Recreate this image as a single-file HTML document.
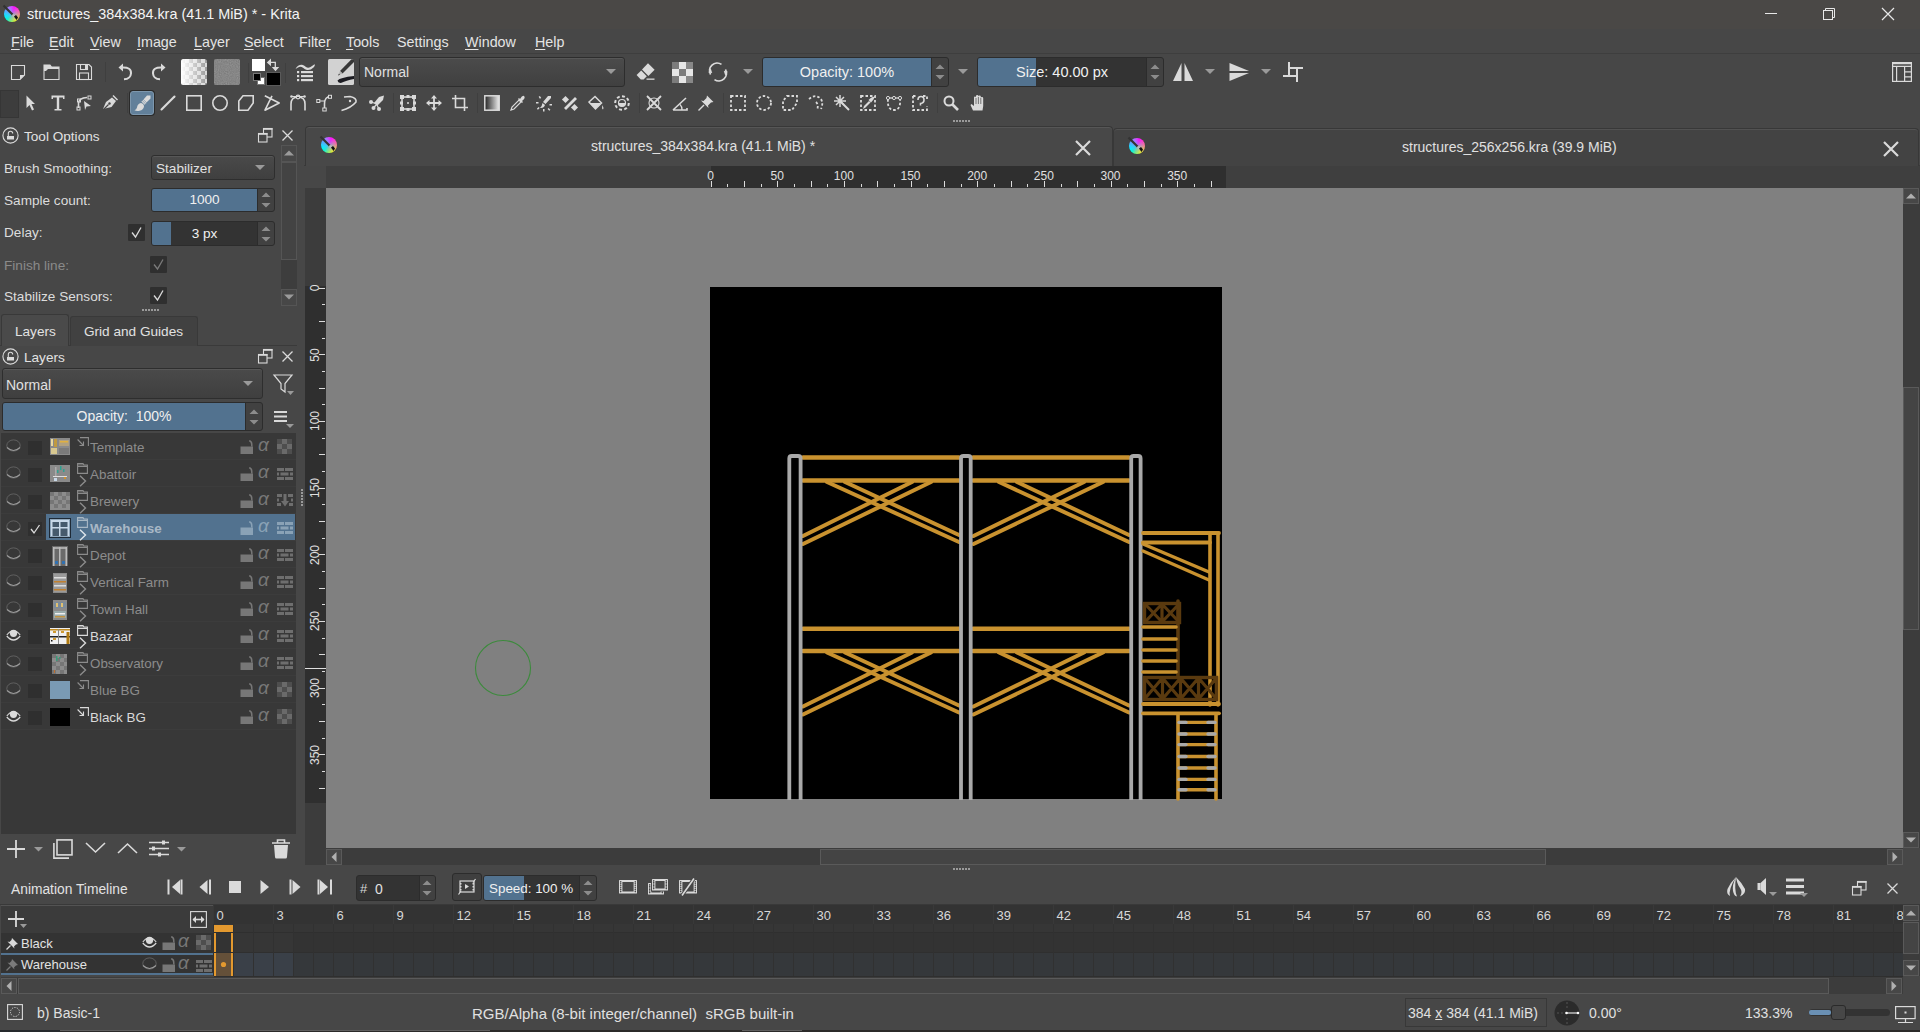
<!DOCTYPE html><html><head><meta charset="utf-8"><style>
*{margin:0;padding:0;box-sizing:border-box}
html,body{width:1920px;height:1032px;overflow:hidden;background:#474747;font-family:"Liberation Sans",sans-serif;color:#dcdcdc}
.a{position:absolute}
.t{position:absolute;white-space:nowrap;line-height:1}
svg{position:absolute;overflow:visible}
</style></head><body><div class="a" style="left:0px;top:0px;width:1920px;height:29px;background:#4a4846;"></div>
<div class="a" style="left:3.8499999999999996px;top:6.049999999999999px;width:16.3px;height:16.3px;border-radius:50%;background:conic-gradient(from 20deg,#ff10ff,#ff6a9a 60deg,#ffc040 100deg,#ffff00 135deg,#80ff60 170deg,#00ffd0 200deg,#00f0ff 230deg,#60a0ff 280deg,#b070ff 320deg,#ff10ff 360deg)"></div>
<div class="a" style="left:3.8499999999999996px;top:6.049999999999999px;width:16.3px;height:16.3px;border-radius:50%;background:radial-gradient(circle at 55% 60%,rgba(120,170,230,0.85) 0,rgba(120,170,230,0.4) 30%,rgba(255,255,255,0) 62%)"></div>
<svg style="left:3px;top:5.199999999999999px;" width="18" height="18" viewBox="0 0 18 18"><line x1="0.5" y1="0.5" x2="10" y2="10" stroke="#333" stroke-width="2.2"/><line x1="9.5" y1="9.5" x2="11.5" y2="11.5" stroke="#bbb" stroke-width="2.2"/><path d="M11 11.5 L13 10 L15 12.5 L13.5 15 Z" fill="#111"/></svg>
<div class="t" style="left:27px;top:7px;font-size:14.4px;color:#f4f4f4;">structures_384x384.kra (41.1 MiB) * - Krita</div>
<svg style="left:1750px;top:0px;" width="170" height="29" viewBox="0 0 170 29"><g stroke="#e8e8e8" stroke-width="1" fill="none"><line x1="15" y1="13.5" x2="27" y2="13.5"/><rect x="73.5" y="10.5" width="9" height="9"/><path d="M75.5 10.5 V8.5 H84.5 V17.5 H82.5"/><path d="M132 8 L144 20 M144 8 L132 20" stroke-width="1.2"/></g></svg>
<div class="a" style="left:0px;top:29px;width:1920px;height:24px;background:#474747;"></div>
<div class="t" style="left:11px;top:35px;font-size:14.3px;color:#e4e4e4;"><u style="text-decoration-thickness:1px;text-underline-offset:2px">F</u>ile</div>
<div class="t" style="left:49px;top:35px;font-size:14.3px;color:#e4e4e4;"><u style="text-decoration-thickness:1px;text-underline-offset:2px">E</u>dit</div>
<div class="t" style="left:90px;top:35px;font-size:14.3px;color:#e4e4e4;"><u style="text-decoration-thickness:1px;text-underline-offset:2px">V</u>iew</div>
<div class="t" style="left:137px;top:35px;font-size:14.3px;color:#e4e4e4;"><u style="text-decoration-thickness:1px;text-underline-offset:2px">I</u>mage</div>
<div class="t" style="left:194px;top:35px;font-size:14.3px;color:#e4e4e4;"><u style="text-decoration-thickness:1px;text-underline-offset:2px">L</u>ayer</div>
<div class="t" style="left:244px;top:35px;font-size:14.3px;color:#e4e4e4;"><u style="text-decoration-thickness:1px;text-underline-offset:2px">S</u>elect</div>
<div class="t" style="left:299px;top:35px;font-size:14.3px;color:#e4e4e4;">Filte<u style="text-decoration-thickness:1px;text-underline-offset:2px">r</u></div>
<div class="t" style="left:346px;top:35px;font-size:14.3px;color:#e4e4e4;"><u style="text-decoration-thickness:1px;text-underline-offset:2px">T</u>ools</div>
<div class="t" style="left:397px;top:35px;font-size:14.3px;color:#e4e4e4;">Settin<u style="text-decoration-thickness:1px;text-underline-offset:2px">g</u>s</div>
<div class="t" style="left:465px;top:35px;font-size:14.3px;color:#e4e4e4;"><u style="text-decoration-thickness:1px;text-underline-offset:2px">W</u>indow</div>
<div class="t" style="left:535px;top:35px;font-size:14.3px;color:#e4e4e4;"><u style="text-decoration-thickness:1px;text-underline-offset:2px">H</u>elp</div>
<div class="a" style="left:0px;top:53px;width:1920px;height:1px;background:#3e3e3e;"></div>
<svg style="left:10px;top:64px;" width="16" height="16" viewBox="0 0 16 16"><path d="M1.5 1.5 H14.5 V11 L10 15.5 H1.5 Z" fill="none" stroke="#dadada" stroke-width="1.1"/><path d="M14.5 11 H10 V15.5 Z" fill="#dadada"/></svg>
<svg style="left:43px;top:64px;" width="17" height="16" viewBox="0 0 17 16"><path d="M1 15.5 V1 H7 L8.5 3 H16 V15.5 Z" fill="none" stroke="#dadada" stroke-width="1.1"/><path d="M1 1 H7 L8.5 3 H16 V5 H5 L3 7 H1 Z" fill="#dadada"/></svg>
<svg style="left:76px;top:64px;" width="16" height="16" viewBox="0 0 16 16"><path d="M0.5 0.5 H13 L15.5 3 V15.5 H0.5 Z" fill="none" stroke="#dadada" stroke-width="1.1"/><rect x="4.5" y="0.5" width="7" height="5" fill="none" stroke="#dadada" stroke-width="1.1"/><rect x="3.5" y="9" width="9" height="6.5" fill="none" stroke="#dadada" stroke-width="1.1"/><rect x="9" y="1" width="2" height="4" fill="#dadada"/></svg>
<div class="a" style="left:105px;top:62px;width:1px;height:20px;background:#3f3f3f;"></div>
<svg style="left:117px;top:62px;" width="18" height="19" viewBox="0 0 18 19"><path d="M5 5.5 Q14.5 5 14 11.5 Q13.5 17 7 17.3" fill="none" stroke="#dadada" stroke-width="2"/><path d="M1.5 5.5 L6 1.5 V9.5 Z" fill="#dadada"/></svg>
<svg style="left:149px;top:62px;" width="18" height="19" viewBox="0 0 18 19"><path d="M13 5.5 Q3.5 5 4 11.5 Q4.5 17 11 17.3" fill="none" stroke="#dadada" stroke-width="2"/><path d="M16.5 5.5 L12 1.5 V9.5 Z" fill="#dadada"/></svg>
<svg style="left:181px;top:59px;" width="26" height="26" viewBox="0 0 26 26"><defs><pattern id="ck1" width="8" height="8" patternUnits="userSpaceOnUse"><rect width="8" height="8" fill="#d8d8d8"/><rect width="4" height="4" fill="#9a9a9a"/><rect x="4" y="4" width="4" height="4" fill="#9a9a9a"/></pattern><linearGradient id="gw" x1="0" x2="1"><stop offset="0" stop-color="#fff" stop-opacity="1"/><stop offset="1" stop-color="#fff" stop-opacity="0"/></linearGradient></defs><rect width="26" height="26" rx="2.5" fill="url(#ck1)"/><rect width="26" height="26" rx="2.5" fill="url(#gw)"/></svg>
<svg style="left:214px;top:59px;" width="26" height="26" viewBox="0 0 26 26"><defs><filter id="nz" x="0" y="0" width="1" height="1"><feTurbulence type="fractalNoise" baseFrequency="0.9" numOctaves="2" seed="3"/><feColorMatrix type="matrix" values="0 0 0 0 0.47  0 0 0 0 0.47  0 0 0 0 0.47  0.3 0.3 0.3 0 -0.25"/></filter></defs><rect width="26" height="26" rx="2.5" fill="#7a7a7a"/><rect width="26" height="26" rx="2.5" fill="#7a7a7a" filter="url(#nz)"/></svg>
<div class="a" style="left:248px;top:63px;width:1px;height:20px;background:#3f3f3f;"></div>
<div class="a" style="left:252px;top:59px;width:13px;height:12px;background:#ffffff;"></div>
<div class="a" style="left:267px;top:73px;width:13px;height:12px;background:#000000;outline:1px solid #5a5a5a"></div>
<svg style="left:253px;top:73px;" width="12" height="12" viewBox="0 0 12 12"><rect x="0.5" y="0.5" width="7" height="7" fill="#000" stroke="#777"/><rect x="4.5" y="4.5" width="7" height="7" fill="#fff" stroke="#777"/><rect x="0.5" y="0.5" width="7" height="7" fill="#000" stroke="#777"/></svg>
<svg style="left:266px;top:58px;" width="15" height="15" viewBox="0 0 15 15"><path d="M4.5 4.4 H9.3 V9.5" fill="none" stroke="#dadada" stroke-width="1.3"/><path d="M0.8 4.4 L5 0.6 V8.2 Z M5.8 9 H13.2 L9.5 13.2 Z" fill="#dadada"/></svg>
<div class="a" style="left:285px;top:63px;width:1px;height:20px;background:#3f3f3f;"></div>
<svg style="left:295px;top:62px;" width="21" height="20" viewBox="0 0 21 20"><path d="M0.5 7 Q3 2.5 7 2.8 Q9 3 11 5 Q13 6.5 15.5 5 Q18 3.2 19.5 2.2 Q20.5 3 18.5 5.5 Q15.5 8.5 12 8 Q10 7.5 8 5.8 Q5.5 4 3 5.5 Z" fill="#dadada"/><rect x="2" y="9" width="2.2" height="2.2" fill="#dadada"/><rect x="2" y="13" width="2.2" height="2.2" fill="#dadada"/><rect x="2" y="17" width="2.2" height="2.2" fill="#dadada"/><rect x="6" y="9" width="12" height="2.2" fill="#dadada"/><rect x="6" y="13" width="12" height="2.2" fill="#dadada"/><rect x="6" y="17" width="12" height="2.2" fill="#dadada"/></svg>
<svg style="left:328px;top:59px;" width="26" height="26" viewBox="0 0 26 26"><rect width="26" height="26" rx="1.5" fill="#d2d2d2"/><path d="M12 12 L23.5 0.3 L26 0.3 L26 3 L14.5 14.5 Z" fill="#383838"/><path d="M12 12 L14.5 14.5 L10.2 16.4 Z" fill="#b0b0b0"/><path d="M10.2 16.4 L10.9 14.7 L11.9 15.7 Z" fill="#222"/><path d="M9.5 21.5 Q12 18.5 26 17 V20 Q18 21.5 13.5 23.8 Q10 24.5 9.5 21.5 Z" fill="#1c1c22"/></svg>
<div class="a" style="left:359px;top:57px;width:266px;height:30px;border:1px solid #2d2d2d;border-radius:3px;background:linear-gradient(#4b4b4b,#404040);box-shadow:inset 0 1px 0 #575757"></div>
<div class="t" style="left:364px;top:65px;font-size:14px;color:#e0e0e0;">Normal</div>
<svg style="left:606px;top:69px;" width="11" height="6" viewBox="0 0 11 6"><path d="M0 0 H10 L5 5 Z" fill="#9a9a9a"/></svg>
<svg style="left:636px;top:62px;" width="20" height="19" viewBox="0 0 20 19"><path d="M6 7.5 L12 1.2 L18.6 7.8 L12.4 14 Z" fill="#dadada"/><path d="M0.6 13 L5.2 8.6 L10.8 14.3 L7.6 17.6 H4.8 Z" fill="#dadada"/><rect x="10.5" y="16.5" width="8" height="1.3" fill="#dadada"/></svg>
<svg style="left:672px;top:62px;" width="21" height="21" viewBox="0 0 21 21"><rect width="21" height="21" fill="#e6e6e6"/><g fill="#7c7c7c"><rect x="0" y="0" width="7" height="7"/><rect x="14" y="0" width="7" height="7" fill="#888"/><rect x="7" y="7" width="7" height="7"/><rect x="0" y="14" width="7" height="7"/><rect x="14" y="14" width="7" height="7" fill="#888"/></g></svg>
<svg style="left:708px;top:62px;" width="20" height="20" viewBox="0 0 20 20"><path d="M2.6 12.5 A7.6 7.6 0 0 1 13.5 2.4" fill="none" stroke="#dadada" stroke-width="1.7"/><path d="M17.4 7.5 A7.6 7.6 0 0 1 6.5 17.6" fill="none" stroke="#dadada" stroke-width="1.7"/><path d="M15.8 9 L17.3 13.8 L19.6 9.6 Z M4.2 11 L2.7 6.2 L0.4 10.4 Z" fill="#dadada"/></svg>
<svg style="left:743px;top:69px;" width="11" height="6" viewBox="0 0 11 6"><path d="M0 0 H10 L5 5 Z" fill="#9a9a9a"/></svg>
<div class="a" style="left:762px;top:57px;width:187px;height:30px;border:1px solid #2c2c2c;border-radius:3px;background:#414141;overflow:hidden"><div class="a" style="left:0;top:0;width:168px;height:28px;background:#333333"></div><div class="a" style="left:0;top:0;width:169px;height:28px;background:#52728f"></div><div class="a" style="left:168px;top:0;width:1px;height:28px;background:#2c2c2c"></div></div>
<svg style="left:934.5px;top:62.0px;" width="10" height="20" viewBox="0 0 10 20"><path d="M0.5 7 L5 2.5 L9.5 7 Z M0.5 13 L5 17.5 L9.5 13 Z" fill="#8c8c8c"/></svg>
<div class="t" style="left:762px;top:57px;width:170px;height:30px;line-height:30px;text-align:center;font-size:14.5px;color:#f0f0f0">Opacity: 100%</div>
<svg style="left:958px;top:69px;" width="11" height="6" viewBox="0 0 11 6"><path d="M0 0 H10 L5 5 Z" fill="#9a9a9a"/></svg>
<div class="a" style="left:977px;top:57px;width:187px;height:30px;border:1px solid #2c2c2c;border-radius:3px;background:#414141;overflow:hidden"><div class="a" style="left:0;top:0;width:168px;height:28px;background:#333333"></div><div class="a" style="left:0;top:0;width:58px;height:28px;background:#52728f"></div><div class="a" style="left:168px;top:0;width:1px;height:28px;background:#2c2c2c"></div></div>
<svg style="left:1149.5px;top:62.0px;" width="10" height="20" viewBox="0 0 10 20"><path d="M0.5 7 L5 2.5 L9.5 7 Z M0.5 13 L5 17.5 L9.5 13 Z" fill="#8c8c8c"/></svg>
<div class="t" style="left:977px;top:57px;width:170px;height:30px;line-height:30px;text-align:center;font-size:14.5px;color:#f0f0f0">Size: 40.00 px</div>
<svg style="left:1172px;top:62px;" width="22" height="20" viewBox="0 0 22 20"><path d="M1 19 L9.5 1 V19 Z M21 19 L12.5 1 V19 Z" fill="#dadada"/></svg>
<svg style="left:1205px;top:69px;" width="11" height="6" viewBox="0 0 11 6"><path d="M0 0 H10 L5 5 Z" fill="#9a9a9a"/></svg>
<svg style="left:1228px;top:62px;" width="22" height="20" viewBox="0 0 22 20"><path d="M1.5 1 L21 9 H1.5 Z M1.5 19 L21 11 H1.5 Z" fill="#dadada"/></svg>
<svg style="left:1261px;top:69px;" width="11" height="6" viewBox="0 0 11 6"><path d="M0 0 H10 L5 5 Z" fill="#9a9a9a"/></svg>
<svg style="left:1282px;top:60px;" width="24" height="24" viewBox="0 0 24 24"><path d="M7 2 V17 M6 8 H21 M1 16 H16 M15 8 V22" fill="none" stroke="#dadada" stroke-width="2"/></svg>
<svg style="left:1892px;top:62px;" width="20" height="20" viewBox="0 0 20 20"><rect x="0.6" y="0.6" width="18.8" height="18.8" fill="none" stroke="#dadada" stroke-width="1.2"/><path d="M0.6 1.6 H19.4 M0.6 4.3 H19.4 M4.6 4.3 V19.4 M12.6 4.3 V19.4 M12.6 9.8 H19.4 M12.6 14.8 H19.4" fill="none" stroke="#dadada" stroke-width="1.2"/></svg>
<div class="a" style="left:0px;top:90px;width:19px;height:28px;background:#3d3d3d;border:1px solid #363636"></div>
<svg style="left:25.0px;top:95px;" width="12" height="16" viewBox="0 0 12 16"><path d="M1.5 0.5 L10 9 H6.5 L9 14.5 L7 15.5 L4.5 10 L1.5 13 Z" fill="#dadada"/></svg>
<svg style="left:51.0px;top:95px;" width="14" height="16" viewBox="0 0 14 16"><path d="M0.5 0.5 H13.5 V4 H12 V2.5 H8.2 V14 H10.5 V15.5 H3.5 V14 H5.8 V2.5 H2 V4 H0.5 Z" fill="#dadada"/></svg>
<svg style="left:76.0px;top:95px;" width="16" height="16" viewBox="0 0 16 16"><path d="M2.5 13 V8 Q3 3 11 2.5" fill="none" stroke="#dadada" stroke-width="1.6" stroke-width="1.2"/><rect x="1" y="12" width="3" height="3" fill="none" stroke="#dadada"/><rect x="1.5" y="4" width="3" height="3" fill="none" stroke="#dadada"/><rect x="12" y="1" width="3" height="3" fill="none" stroke="#dadada"/><path d="M8 6 L15 11 L10.5 11.5 L9 15 Z" fill="#dadada"/></svg>
<svg style="left:102.0px;top:95px;" width="16" height="16" viewBox="0 0 16 16"><path d="M1 14 L4 7 L10 2.5 L14 6 L9.5 12 Z" fill="#dadada"/><path d="M1.5 14.5 L6.5 9.5" stroke="#474747" stroke-width="1.3"/><circle cx="7.5" cy="8.5" r="1.2" fill="#474747"/><path d="M11 0.5 L15.5 5" stroke="#dadada" stroke-width="1.4"/></svg>
<div class="a" style="left:127px;top:93px;width:1px;height:20px;background:#3f3f3f;"></div>
<div class="a" style="left:129px;top:90px;width:26px;height:26px;background:#2a2a2a;border-radius:4px"></div>
<div class="a" style="left:130px;top:91px;width:24px;height:24px;background:#62809a;border:1px solid #7d97ad;border-radius:3px"></div>
<svg style="left:134px;top:95px;" width="17" height="17" viewBox="0 0 17 17"><path d="M9.5 4.5 L13 0.5 H16.5 V3.5 L12.5 7.5 Z" fill="#dadada"/><path d="M7.8 6.2 L11 9.4 M8.9 5.1 L12.1 8.3" stroke="#dadada" stroke-width="1.1"/><path d="M7 8 Q10 8.5 10 11.5 Q9.5 15 5.5 15.8 Q2.5 16.3 0.5 15.3 Q2.5 14.5 3 12.5 Q3.5 8.5 7 8 Z" fill="#dadada"/></svg>
<svg style="left:160.0px;top:95px;" width="16" height="16" viewBox="0 0 16 16"><line x1="1.5" y1="14.5" x2="14.5" y2="1.5" stroke="#dadada" stroke-width="2.1" stroke-linecap="round"/></svg>
<svg style="left:186.0px;top:95px;" width="16" height="16" viewBox="0 0 16 16"><rect x="0.8" y="0.8" width="14.4" height="14.4" fill="none" stroke="#dadada" stroke-width="1.6"/></svg>
<svg style="left:212.0px;top:95px;" width="16" height="16" viewBox="0 0 16 16"><circle cx="8" cy="8" r="7.2" fill="none" stroke="#dadada" stroke-width="1.6"/></svg>
<svg style="left:238.0px;top:95px;" width="16" height="16" viewBox="0 0 16 16"><path d="M5 0.8 H15.2 V8 L10 15.2 H0.8 V6 Z" fill="none" stroke="#dadada" stroke-width="1.6"/></svg>
<svg style="left:264.0px;top:95px;" width="16" height="16" viewBox="0 0 16 16"><path d="M0.8 0.8 L15.2 8 L1 15.2 L8 0.8" fill="none" stroke="#dadada" stroke-width="1.6" stroke-linejoin="round"/></svg>
<svg style="left:290.0px;top:95px;" width="16" height="16" viewBox="0 0 16 16"><path d="M1 15.5 V9 Q1 2 8 2 Q15 2 15 9 V15.5" fill="none" stroke="#dadada" stroke-width="1.6"/><circle cx="8" cy="2" r="1.8" fill="#474747" stroke="#dadada" stroke-width="1.2"/><circle cx="1.5" cy="1.5" r="1.3" fill="#dadada"/><circle cx="14.5" cy="1.5" r="1.3" fill="#dadada"/><line x1="1.5" y1="1.5" x2="14.5" y2="1.5" stroke="#dadada" stroke-width="1"/></svg>
<svg style="left:316.0px;top:95px;" width="16" height="16" viewBox="0 0 16 16"><path d="M8.5 15 V9 Q8.5 1.5 14.5 1.5" fill="none" stroke="#dadada" stroke-width="1.6"/><rect x="6.8" y="13" width="3.4" height="3" fill="#474747" stroke="#dadada" stroke-width="1"/><rect x="0.8" y="4.5" width="3" height="3" fill="#474747" stroke="#dadada" stroke-width="1"/><rect x="12.5" y="0.3" width="3" height="3" fill="#474747" stroke="#dadada" stroke-width="1"/><path d="M3.8 6 H8.5" stroke="#dadada"/></svg>
<svg style="left:341.0px;top:95px;" width="16" height="16" viewBox="0 0 16 16"><path d="M0.5 15.5 Q10 13 15 7 Q16 3 9 1.5 L3 2" fill="none" stroke="#dadada" stroke-width="1.6"/><circle cx="9" cy="6" r="1.2" fill="#dadada"/></svg>
<svg style="left:367.5px;top:95px;" width="17" height="16" viewBox="0 0 17 16"><path d="M16 0.5 L11 2 L6 8 L9 11 L15 5 Z" fill="#dadada"/><circle cx="3" cy="7" r="2" fill="#dadada"/><circle cx="5.5" cy="13" r="2" fill="#dadada"/><circle cx="11" cy="14" r="2" fill="#dadada"/><path d="M3 7 L9 9 M5.5 13 L8 10 M11 14 L9 10" stroke="#dadada" stroke-width="1.2"/></svg>
<div class="a" style="left:393px;top:93px;width:1px;height:20px;background:#3f3f3f;"></div>
<svg style="left:400.0px;top:95px;" width="16" height="16" viewBox="0 0 16 16"><rect x="2" y="2" width="12" height="12" fill="none" stroke="#dadada" stroke-width="1.6"/><g fill="#dadada"><rect x="0" y="0" width="4" height="4"/><rect x="12" y="0" width="4" height="4"/><rect x="0" y="12" width="4" height="4"/><rect x="12" y="12" width="4" height="4"/><rect x="0" y="6.5" width="3" height="3"/><rect x="13" y="6.5" width="3" height="3"/><rect x="6.5" y="0" width="3" height="3"/><rect x="6.5" y="13" width="3" height="3"/><circle cx="8" cy="8" r="1"/></g></svg>
<svg style="left:426.0px;top:95px;" width="16" height="16" viewBox="0 0 16 16"><path d="M8 1 V15 M1 8 H15" stroke="#dadada" stroke-width="1.8"/><path d="M8 0 L11 3.5 H5 Z M8 16 L11 12.5 H5 Z M0 8 L3.5 5 V11 Z M16 8 L12.5 5 V11 Z" fill="#dadada"/></svg>
<svg style="left:452.0px;top:95px;" width="16" height="16" viewBox="0 0 16 16"><path d="M3.5 0 V12.5 H16 M0 3.5 H12.5 V16" fill="none" stroke="#dadada" stroke-width="1.6" stroke-width="1.8"/></svg>
<div class="a" style="left:477px;top:93px;width:1px;height:20px;background:#3f3f3f;"></div>
<svg style="left:484.0px;top:95px;" width="16" height="16" viewBox="0 0 16 16"><defs><linearGradient id="gg"><stop offset="0" stop-color="#222"/><stop offset="1" stop-color="#eee"/></linearGradient></defs><rect x="0.8" y="0.8" width="14.4" height="14.4" fill="url(#gg)" stroke="#dadada" stroke-width="1.5"/></svg>
<svg style="left:510.0px;top:95px;" width="16" height="16" viewBox="0 0 16 16"><path d="M1 15 L2 12 L9 5 L11 7 L4 14 Z" fill="none" stroke="#dadada" stroke-width="1.2"/><path d="M8 4 L12 8 L13 7 L12 6 Q16 3 14 1 Q12.5 0 10 4 L9 3 Z" fill="#dadada"/></svg>
<svg style="left:536.0px;top:95px;" width="16" height="16" viewBox="0 0 16 16"><path d="M15 1 L12 1 L7 7 L9.5 9 L15 3 Z M6.5 8 L9 10 Q8 13.5 4 13 Q6 11.5 6.5 8 Z" fill="#dadada"/><g fill="#dadada"><rect x="0" y="7" width="2.5" height="1.5"/><rect x="13.5" y="9" width="2.5" height="1.5"/><rect x="7" y="14" width="1.5" height="2.5"/><rect x="3" y="1" width="1.5" height="2.5" transform="rotate(-30 4 2)"/><rect x="2" y="12.5" width="1.5" height="2.5" transform="rotate(45 3 13)"/><rect x="12" y="13" width="1.5" height="2.5" transform="rotate(-45 13 14)"/></g></svg>
<svg style="left:562.0px;top:95px;" width="16" height="16" viewBox="0 0 16 16"><path d="M2 13 L13 2 L15 4 L4 15 Z" fill="#dadada"/><rect x="1" y="2" width="5" height="5" fill="#dadada" transform="rotate(45 3.5 4.5)"/><rect x="10" y="10" width="5" height="5" fill="#dadada" transform="rotate(45 12.5 12.5)"/></svg>
<svg style="left:588.0px;top:95px;" width="16" height="16" viewBox="0 0 16 16"><path d="M1 7 L7 1.5 L13.5 8 L7.5 14 Z" fill="none" stroke="#dadada" stroke-width="1.5"/><path d="M1.5 8 H13 L7.5 14 Z" fill="#dadada"/><path d="M14.5 10 Q16 13 15 14.5 Q13.5 14 14.5 10 Z" fill="#dadada"/></svg>
<svg style="left:614.0px;top:95px;" width="16" height="16" viewBox="0 0 16 16"><circle cx="8" cy="8" r="6.8" fill="none" stroke="#dadada" stroke-width="2" stroke-dasharray="3 2.3"/><circle cx="8" cy="8" r="3.5" fill="none" stroke="#dadada" stroke-width="1.2"/><path d="M4.5 8 H11.5 A3.5 3.5 0 0 1 4.5 8 Z" fill="#dadada"/></svg>
<div class="a" style="left:639px;top:93px;width:1px;height:20px;background:#3f3f3f;"></div>
<svg style="left:646.0px;top:95px;" width="16" height="16" viewBox="0 0 16 16"><path d="M1 1 L15 15 M15 1 L1 15" stroke="#dadada" stroke-width="1.8"/><circle cx="8" cy="8" r="5" fill="none" stroke="#dadada" stroke-width="1.1"/></svg>
<svg style="left:672.0px;top:95px;" width="16" height="16" viewBox="0 0 16 16"><path d="M1 15 H15 L15 13 M1 15 L14 3" fill="none" stroke="#dadada" stroke-width="1.6"/><path d="M8 9.5 Q10.5 12 10 15" fill="none" stroke="#dadada" stroke-width="1.3"/></svg>
<svg style="left:698.0px;top:95px;" width="16" height="16" viewBox="0 0 16 16"><path d="M9 0.5 L15.5 7 L13 7.5 L10 10.5 L10.5 13 L3 5.5 L5.5 6 L8.5 3 Z" fill="#dadada"/><path d="M0.5 15.5 L6 10" stroke="#dadada" stroke-width="1.4"/></svg>
<div class="a" style="left:723px;top:93px;width:1px;height:20px;background:#3f3f3f;"></div>
<svg style="left:730.0px;top:95px;" width="16" height="16" viewBox="0 0 16 16"><rect x="1" y="1" width="14" height="14" fill="none" stroke="#dadada" stroke-width="1.8" stroke-dasharray="2.5 2"/></svg>
<svg style="left:756.0px;top:95px;" width="16" height="16" viewBox="0 0 16 16"><circle cx="8" cy="8" r="7" fill="none" stroke="#dadada" stroke-width="1.8" stroke-dasharray="2.5 2"/></svg>
<svg style="left:782.0px;top:95px;" width="16" height="16" viewBox="0 0 16 16"><path d="M5 1 H15 V8 L10 15 H1 V6 Z" fill="none" stroke="#dadada" stroke-width="1.8" stroke-dasharray="2.5 2"/></svg>
<svg style="left:808.0px;top:95px;" width="16" height="16" viewBox="0 0 16 16"><path d="M1 4 Q7 -1 12 3 Q16 7 13 14 M8 7 Q11 10 9 15" fill="none" stroke="#dadada" stroke-width="1.8" stroke-dasharray="2.5 2"/></svg>
<svg style="left:834.0px;top:95px;" width="16" height="16" viewBox="0 0 16 16"><path d="M6 6 L15 15" stroke="#dadada" stroke-width="2"/><path d="M6 0 V12 M0 6 H12 M2 2 L10 10 M10 2 L2 10" stroke="#dadada" stroke-width="1.5"/></svg>
<svg style="left:860.0px;top:95px;" width="16" height="16" viewBox="0 0 16 16"><rect x="1" y="1" width="14" height="14" fill="none" stroke="#dadada" stroke-width="1.8" stroke-dasharray="2.5 2"/><path d="M3 14 L4 11 L9 6 L10.5 7.5 L5.5 12.5 Z" fill="#dadada"/><path d="M8.5 5 Q13 1 14 2 Q15 3 11 7.5 Z" fill="#dadada"/></svg>
<svg style="left:886.0px;top:95px;" width="16" height="16" viewBox="0 0 16 16"><path d="M2 4 Q1 15 8 15 Q15 15 14 4" fill="none" stroke="#dadada" stroke-width="1.8" stroke-dasharray="2.5 2"/><path d="M2 3 H14" stroke="#dadada" stroke-width="1.3"/><circle cx="2" cy="3" r="1.6" fill="#474747" stroke="#dadada"/><circle cx="8" cy="3" r="1.6" fill="#474747" stroke="#dadada"/><circle cx="14" cy="3" r="1.6" fill="#474747" stroke="#dadada"/></svg>
<svg style="left:912.0px;top:95px;" width="16" height="16" viewBox="0 0 16 16"><path d="M1 1 H5 M1 1 V15 H15 V11 M11 1 H15 V5" fill="none" stroke="#dadada" stroke-width="1.8" stroke-dasharray="2.5 2"/><path d="M6 5 Q6 1.5 9 1.5 Q12 1.5 12 5 Q12 8 8.5 8.5 V10.5" fill="none" stroke="#dadada" stroke-width="1.6"/></svg>
<div class="a" style="left:937px;top:93px;width:1px;height:20px;background:#3f3f3f;"></div>
<svg style="left:943.0px;top:95px;" width="16" height="16" viewBox="0 0 16 16"><circle cx="6" cy="6" r="4.5" fill="none" stroke="#dadada" stroke-width="2"/><path d="M9.5 9.5 L15 15" stroke="#dadada" stroke-width="2.6"/></svg>
<svg style="left:970.0px;top:95px;" width="14" height="16" viewBox="0 0 14 16"><path d="M3 15.5 L0.5 10 L1.5 9 L4 11 V2.5 Q4 1.5 5 1.5 Q6 1.5 6 2.5 V1 Q6 0 7.2 0 Q8.4 0 8.4 1 V1.5 Q8.4 0.5 9.6 0.5 Q10.8 0.5 10.8 1.5 V3 Q10.8 2 12 2 Q13.2 2 13.2 3 V11 L12.5 15.5 Z" fill="#dadada"/><path d="M6 3 V9 M8.4 2 V9 M10.8 3 V9" stroke="#474747" stroke-width="0.7"/></svg>
<svg style="left:953px;top:120px;" width="18" height="3" viewBox="0 0 18 3"><rect x="0" y="0" width="2" height="2" fill="#9a9a9a"/><rect x="3" y="0" width="2" height="2" fill="#9a9a9a"/><rect x="6" y="0" width="2" height="2" fill="#9a9a9a"/><rect x="9" y="0" width="2" height="2" fill="#9a9a9a"/><rect x="12" y="0" width="2" height="2" fill="#9a9a9a"/><rect x="15" y="0" width="2" height="2" fill="#9a9a9a"/></svg>
<svg style="left:2px;top:127px;" width="17" height="17" viewBox="0 0 17 17"><circle cx="8.5" cy="8.5" r="7.6" fill="none" stroke="#dadada" stroke-width="1.1"/><path d="M5 9 H12 V12.5 H5 Z" fill="#dadada"/><path d="M6.3 9 V6.5 Q6.3 4.3 8.5 4.3 Q10.7 4.3 10.7 6.5" fill="none" stroke="#dadada" stroke-width="1.1"/></svg>
<div class="t" style="left:24px;top:130px;font-size:13.6px;color:#e2e2e2;">Tool Options</div>
<svg style="left:257px;top:127px;" width="16" height="16" viewBox="0 0 16 16"><rect x="6.5" y="1.5" width="8.5" height="8.5" fill="none" stroke="#dadada" stroke-width="1.1"/><rect x="6" y="1" width="9.5" height="1.8" fill="#dadada"/><rect x="1.5" y="6.5" width="8.5" height="8.5" fill="#474747" stroke="#dadada" stroke-width="1.1"/><rect x="1" y="6" width="9.5" height="1.8" fill="#dadada"/></svg>
<svg style="left:282px;top:130px;" width="11" height="11" viewBox="0 0 11 11"><path d="M0.5 0.5 L10.5 10.5 M10.5 0.5 L0.5 10.5" stroke="#dadada" stroke-width="1.3"/></svg>
<div class="t" style="left:4px;top:162px;font-size:13.6px;color:#dcdcdc;">Brush Smoothing:</div>
<div class="a" style="left:151px;top:155px;width:124px;height:25px;border:1px solid #2e2e2e;border-radius:3px;background:linear-gradient(#4a4a4a,#3f3f3f);box-shadow:inset 0 1px 0 #575757"></div>
<div class="t" style="left:156px;top:161.7px;font-size:13.6px;color:#e0e0e0;">Stabilizer</div>
<svg style="left:255px;top:164.5px;" width="11" height="6" viewBox="0 0 11 6"><path d="M0 0 H10 L5 5 Z" fill="#9a9a9a"/></svg>
<div class="t" style="left:4px;top:194px;font-size:13.6px;color:#dcdcdc;">Sample count:</div>
<div class="a" style="left:151px;top:188px;width:124px;height:24px;border:1px solid #2c2c2c;border-radius:3px;background:#414141;overflow:hidden"><div class="a" style="left:0;top:0;width:105px;height:22px;background:#333333"></div><div class="a" style="left:0;top:0;width:106px;height:22px;background:#52728f"></div><div class="a" style="left:105px;top:0;width:1px;height:22px;background:#2c2c2c"></div></div>
<svg style="left:260.5px;top:190.0px;" width="10" height="20" viewBox="0 0 10 20"><path d="M0.5 7 L5 2.5 L9.5 7 Z M0.5 13 L5 17.5 L9.5 13 Z" fill="#8c8c8c"/></svg>
<div class="t" style="left:151px;top:188px;width:107px;height:24px;line-height:24px;text-align:center;font-size:13.6px;color:#f0f0f0">1000</div>
<div class="t" style="left:4px;top:226px;font-size:13.6px;color:#dcdcdc;">Delay:</div>
<div class="a" style="left:128px;top:224px;width:17px;height:17px;background:#2f2f2f;border-radius:1px"></div>
<svg style="left:128px;top:224px;" width="17" height="17" viewBox="0 0 17 17"><path d="M4 8.5 L7.5 13 L13 3.5" fill="none" stroke="#dadada" stroke-width="1.3"/></svg>
<div class="a" style="left:151px;top:221px;width:124px;height:25px;border:1px solid #2c2c2c;border-radius:3px;background:#414141;overflow:hidden"><div class="a" style="left:0;top:0;width:105px;height:23px;background:#333333"></div><div class="a" style="left:0;top:0;width:19px;height:23px;background:#52728f"></div><div class="a" style="left:105px;top:0;width:1px;height:23px;background:#2c2c2c"></div></div>
<svg style="left:260.5px;top:223.5px;" width="10" height="20" viewBox="0 0 10 20"><path d="M0.5 7 L5 2.5 L9.5 7 Z M0.5 13 L5 17.5 L9.5 13 Z" fill="#8c8c8c"/></svg>
<div class="t" style="left:151px;top:221px;width:107px;height:25px;line-height:25px;text-align:center;font-size:13.6px;color:#f0f0f0">3 px</div>
<div class="t" style="left:4px;top:259px;font-size:13.6px;color:#8a8a8a;">Finish line:</div>
<div class="a" style="left:150px;top:256px;width:17px;height:17px;background:#2f2f2f;border-radius:1px"></div>
<svg style="left:150px;top:256px;" width="17" height="17" viewBox="0 0 17 17"><path d="M4 8.5 L7.5 13 L13 3.5" fill="none" stroke="#7a7a7a" stroke-width="1.3"/></svg>
<div class="t" style="left:4px;top:290px;font-size:13.6px;color:#dcdcdc;">Stabilize Sensors:</div>
<div class="a" style="left:150px;top:287px;width:17px;height:17px;background:#2f2f2f;border-radius:1px"></div>
<svg style="left:150px;top:287px;" width="17" height="17" viewBox="0 0 17 17"><path d="M4 8.5 L7.5 13 L13 3.5" fill="none" stroke="#dadada" stroke-width="1.3"/></svg>
<div class="a" style="left:281px;top:145px;width:16px;height:161px;background:#3d3d3d;"></div>
<div class="a" style="left:281px;top:145px;width:16px;height:17px;border:1px solid #555;background:#474747"></div>
<svg style="left:284px;top:150px;" width="10" height="6" viewBox="0 0 10 6"><path d="M0 5.5 L5 0.5 L10 5.5 Z" fill="#9a9a9a"/></svg>
<div class="a" style="left:281px;top:162px;width:16px;height:98px;border:1px solid #555;background:#434343"></div>
<div class="a" style="left:281px;top:289px;width:16px;height:17px;border:1px solid #555;background:#474747"></div>
<svg style="left:284px;top:294px;" width="10" height="6" viewBox="0 0 10 6"><path d="M0 0.5 L5 5.5 L10 0.5 Z" fill="#9a9a9a"/></svg>
<svg style="left:142px;top:309px;" width="18" height="2" viewBox="0 0 18 2"><rect x="0" y="0" width="2" height="2" fill="#9a9a9a"/><rect x="3" y="0" width="2" height="2" fill="#9a9a9a"/><rect x="6" y="0" width="2" height="2" fill="#9a9a9a"/><rect x="9" y="0" width="2" height="2" fill="#9a9a9a"/><rect x="12" y="0" width="2" height="2" fill="#9a9a9a"/><rect x="15" y="0" width="2" height="2" fill="#9a9a9a"/></svg>
<div class="a" style="left:0px;top:345px;width:297px;height:1px;background:#3a3a3a;"></div>
<div class="a" style="left:1px;top:314px;width:68px;height:32px;background:#4a4a4a;border:1px solid #393939;border-bottom:none;border-radius:3px 3px 0 0"></div>
<div class="t" style="left:15px;top:325px;font-size:13.6px;color:#e2e2e2;">Layers</div>
<div class="a" style="left:70px;top:316px;width:128px;height:30px;background:#414141;border:1px solid #393939;border-bottom:none;border-radius:3px 3px 0 0"></div>
<div class="t" style="left:84px;top:325px;font-size:13.6px;color:#e2e2e2;">Grid and Guides</div>
<svg style="left:2px;top:348px;" width="17" height="17" viewBox="0 0 17 17"><circle cx="8.5" cy="8.5" r="7.6" fill="none" stroke="#dadada" stroke-width="1.1"/><path d="M5 9 H12 V12.5 H5 Z" fill="#dadada"/><path d="M6.3 9 V6.5 Q6.3 4.3 8.5 4.3 Q10.7 4.3 10.7 6.5" fill="none" stroke="#dadada" stroke-width="1.1"/></svg>
<div class="t" style="left:24px;top:351px;font-size:13.6px;color:#e2e2e2;">Layers</div>
<svg style="left:257px;top:348px;" width="16" height="16" viewBox="0 0 16 16"><rect x="6.5" y="1.5" width="8.5" height="8.5" fill="none" stroke="#dadada" stroke-width="1.1"/><rect x="6" y="1" width="9.5" height="1.8" fill="#dadada"/><rect x="1.5" y="6.5" width="8.5" height="8.5" fill="#474747" stroke="#dadada" stroke-width="1.1"/><rect x="1" y="6" width="9.5" height="1.8" fill="#dadada"/></svg>
<svg style="left:282px;top:351px;" width="11" height="11" viewBox="0 0 11 11"><path d="M0.5 0.5 L10.5 10.5 M10.5 0.5 L0.5 10.5" stroke="#dadada" stroke-width="1.3"/></svg>
<div class="a" style="left:2px;top:368px;width:261px;height:31px;border:1px solid #2e2e2e;border-radius:3px;background:linear-gradient(#4a4a4a,#3f3f3f);box-shadow:inset 0 1px 0 #575757"></div>
<div class="t" style="left:6px;top:377.5px;font-size:14px;color:#e0e0e0;">Normal</div>
<svg style="left:243px;top:380.5px;" width="11" height="6" viewBox="0 0 11 6"><path d="M0 0 H10 L5 5 Z" fill="#9a9a9a"/></svg>
<svg style="left:273px;top:374px;" width="22" height="24" viewBox="0 0 22 24"><path d="M1 1 H19 L12 9.5 V18 L8 15 V9.5 Z" fill="none" stroke="#dadada" stroke-width="1.2"/><path d="M14 17 H21 L17.5 21 Z" fill="#9a9a9a"/></svg>
<div class="a" style="left:2px;top:402px;width:261px;height:29px;border:1px solid #2c2c2c;border-radius:3px;background:#414141;overflow:hidden"><div class="a" style="left:0;top:0;width:242px;height:27px;background:#333333"></div><div class="a" style="left:0;top:0;width:243px;height:27px;background:#52728f"></div><div class="a" style="left:242px;top:0;width:1px;height:27px;background:#2c2c2c"></div></div>
<svg style="left:248.5px;top:406.5px;" width="10" height="20" viewBox="0 0 10 20"><path d="M0.5 7 L5 2.5 L9.5 7 Z M0.5 13 L5 17.5 L9.5 13 Z" fill="#8c8c8c"/></svg>
<div class="t" style="left:2px;top:402px;width:244px;height:29px;line-height:29px;text-align:center;font-size:14px;color:#f0f0f0">Opacity:&nbsp; 100%</div>
<svg style="left:274px;top:410px;" width="22" height="22" viewBox="0 0 22 22"><rect x="0" y="1" width="13" height="2" fill="#dadada"/><rect x="0" y="5.5" width="13" height="2" fill="#dadada"/><rect x="0" y="10" width="13" height="2" fill="#dadada"/><path d="M12 14 H20 L16 18 Z" fill="#9a9a9a"/></svg>
<div class="a" style="left:1px;top:433px;width:295px;height:401px;background:#383838;"></div>
<div class="a" style="left:1px;top:459px;width:295px;height:1px;background:#3c3c3c;"></div>
<svg style="left:6px;top:439px;" width="15" height="14" viewBox="0 0 15 14"><ellipse cx="7.5" cy="6.5" rx="6.7" ry="5.6" fill="none" stroke="#6a6a6a" stroke-width="0.8"/><path d="M1 8.5 Q7.5 14.5 14 8.5" fill="none" stroke="#9c9c9c" stroke-width="1.1"/></svg>
<div class="a" style="left:28px;top:441px;width:14px;height:14px;background:#2f2f2f;"></div>
<!-- Template -->
<svg style="left:50px;top:438px;" width="20" height="17" viewBox="0 0 20 17"><rect width="20" height="17" fill="#8a8a8a"/><rect x="1" y="1" width="2" height="7" fill="#e8d8a0"/><rect x="4" y="1" width="3" height="8" fill="#c09a40"/><rect x="9" y="2" width="10" height="6" fill="#b0a080"/><rect x="10" y="3" width="8" height="1.5" fill="#e0b040"/><rect x="1" y="10" width="6" height="6" fill="#d8c890"/><rect x="9" y="10" width="10" height="6" fill="#7a7a7a"/></svg>
<svg style="left:77px;top:437px;" width="12" height="12" viewBox="0 0 12 12"><path d="M3 0.6 H11.4 V9 M0.6 2.5 L6.5 8.5 M6.5 4.5 V8.5 H2.5" fill="none" stroke="#8c8c8c" stroke-width="1.1"/></svg>
<div class="t" style="left:90px;top:441px;font-size:13.4px;color:#8c8c8c;">Template</div>
<svg style="left:240px;top:440px;" width="14" height="14" viewBox="0 0 14 14"><rect x="0.5" y="6.5" width="12.5" height="7.5" fill="#777777"/><path d="M11.8 6.5 V4.8 Q11.8 1.2 9.2 0.8" fill="none" stroke="#777777" stroke-width="1.5"/></svg>
<div class="t" style="left:258px;top:435px;font-size:19px;color:#777777;font-style:italic">α</div>
<svg style="left:277px;top:439px;" width="15" height="15" viewBox="0 0 15 15"><rect width="15" height="15" fill="#4e4e4e"/><g fill="#6a6a6a"><rect x="5" y="0" width="5" height="5"/><rect x="0" y="5" width="5" height="5"/><rect x="10" y="5" width="5" height="5"/><rect x="5" y="10" width="5" height="5"/></g></svg>
<div class="a" style="left:1px;top:486px;width:295px;height:1px;background:#3c3c3c;"></div>
<svg style="left:6px;top:466px;" width="15" height="14" viewBox="0 0 15 14"><ellipse cx="7.5" cy="6.5" rx="6.7" ry="5.6" fill="none" stroke="#6a6a6a" stroke-width="0.8"/><path d="M1 8.5 Q7.5 14.5 14 8.5" fill="none" stroke="#9c9c9c" stroke-width="1.1"/></svg>
<div class="a" style="left:28px;top:468px;width:14px;height:14px;background:#2f2f2f;"></div>
<!-- Abattoir -->
<svg style="left:50px;top:465px;" width="20" height="17" viewBox="0 0 20 17"><rect width="20" height="17" fill="#8a8a8a"/><rect x="5" y="2" width="1.5" height="10" fill="#aaa"/><rect x="10" y="1" width="1.5" height="4" fill="#30a090"/><rect x="7" y="5" width="1.5" height="3" fill="#30a090"/><rect x="13" y="4" width="1.5" height="3" fill="#30a090"/><rect x="3" y="11" width="14" height="1" fill="#ddd"/><rect x="4" y="13" width="3" height="3" fill="#c8d8e8"/><rect x="14" y="12" width="2" height="2" fill="#d09030"/></svg>
<svg style="left:77px;top:463px;" width="11" height="11" viewBox="0 0 11 11"><path d="M0.6 10.4 V0.6 H6 L7 2 H10.4 V10.4 Z M0.6 3.5 H10.4" fill="none" stroke="#8c8c8c" stroke-width="1.1"/><path d="M0.6 0.6 H6 L7 2 H10.4 V3.5 H0.6 Z" fill="#8c8c8c" opacity="0.35"/></svg>
<svg style="left:79px;top:475px;" width="8" height="12" viewBox="0 0 8 12"><path d="M1 0.8 L6.5 6 L1 11.2" fill="none" stroke="#8c8c8c" stroke-width="1.4"/></svg>
<div class="t" style="left:90px;top:468px;font-size:13.4px;color:#8c8c8c;">Abattoir</div>
<svg style="left:240px;top:467px;" width="14" height="14" viewBox="0 0 14 14"><rect x="0.5" y="6.5" width="12.5" height="7.5" fill="#777777"/><path d="M11.8 6.5 V4.8 Q11.8 1.2 9.2 0.8" fill="none" stroke="#777777" stroke-width="1.5"/></svg>
<div class="t" style="left:258px;top:462px;font-size:19px;color:#777777;font-style:italic">α</div>
<svg style="left:277px;top:468px;" width="16" height="12" viewBox="0 0 16 12"><g fill="#6e6e6e"><rect x="0" y="0" width="7" height="3"/><rect x="8" y="0" width="8" height="3"/><rect x="0" y="4.5" width="2" height="3"/><rect x="3.5" y="4.5" width="8" height="3"/><rect x="13" y="4.5" width="3" height="3"/><rect x="0" y="9" width="7" height="3"/><rect x="8" y="9" width="8" height="3"/></g></svg>
<div class="a" style="left:1px;top:513px;width:295px;height:1px;background:#3c3c3c;"></div>
<svg style="left:6px;top:493px;" width="15" height="14" viewBox="0 0 15 14"><ellipse cx="7.5" cy="6.5" rx="6.7" ry="5.6" fill="none" stroke="#6a6a6a" stroke-width="0.8"/><path d="M1 8.5 Q7.5 14.5 14 8.5" fill="none" stroke="#9c9c9c" stroke-width="1.1"/></svg>
<div class="a" style="left:28px;top:495px;width:14px;height:14px;background:#2f2f2f;"></div>
<!-- Brewery -->
<svg style="left:50px;top:492px;" width="20" height="18" viewBox="0 0 20 18"><rect width="20" height="18" fill="#8c8c8c"/><g fill="#767676"><rect x="0" y="0" width="4" height="4"/><rect x="8" y="0" width="4" height="4"/><rect x="16" y="0" width="4" height="4"/><rect x="4" y="4" width="4" height="4"/><rect x="12" y="4" width="4" height="4"/><rect x="0" y="8" width="4" height="4"/><rect x="8" y="8" width="4" height="4"/><rect x="16" y="8" width="4" height="4"/><rect x="4" y="12" width="4" height="4"/><rect x="12" y="12" width="4" height="4"/></g></svg>
<svg style="left:77px;top:490px;" width="11" height="11" viewBox="0 0 11 11"><path d="M0.6 10.4 V0.6 H6 L7 2 H10.4 V10.4 Z M0.6 3.5 H10.4" fill="none" stroke="#8c8c8c" stroke-width="1.1"/><path d="M0.6 0.6 H6 L7 2 H10.4 V3.5 H0.6 Z" fill="#8c8c8c" opacity="0.35"/></svg>
<svg style="left:79px;top:502px;" width="8" height="12" viewBox="0 0 8 12"><path d="M1 0.8 L6.5 6 L1 11.2" fill="none" stroke="#8c8c8c" stroke-width="1.4"/></svg>
<div class="t" style="left:90px;top:495px;font-size:13.4px;color:#8c8c8c;">Brewery</div>
<svg style="left:240px;top:494px;" width="14" height="14" viewBox="0 0 14 14"><rect x="0.5" y="6.5" width="12.5" height="7.5" fill="#777777"/><path d="M11.8 6.5 V4.8 Q11.8 1.2 9.2 0.8" fill="none" stroke="#777777" stroke-width="1.5"/></svg>
<div class="t" style="left:258px;top:489px;font-size:19px;color:#777777;font-style:italic">α</div>
<svg style="left:277px;top:494px;" width="16" height="13" viewBox="0 0 16 13"><g fill="#6e6e6e"><rect x="0" y="0" width="5" height="3"/><rect x="11" y="0" width="5" height="3"/><rect x="0" y="4.5" width="2" height="3"/><rect x="14" y="4.5" width="2" height="3"/><rect x="0" y="9" width="4" height="3"/><rect x="12" y="9" width="4" height="3"/><path d="M6.5 0 H9.5 V7 H12 L8 12.5 L4 7 H6.5 Z"/></g></svg>
<div class="a" style="left:46px;top:514px;width:249px;height:27px;background:#52728f;"></div>
<div class="a" style="left:1px;top:540px;width:295px;height:1px;background:#3c3c3c;"></div>
<svg style="left:6px;top:520px;" width="15" height="14" viewBox="0 0 15 14"><ellipse cx="7.5" cy="6.5" rx="6.7" ry="5.6" fill="none" stroke="#6a6a6a" stroke-width="0.8"/><path d="M1 8.5 Q7.5 14.5 14 8.5" fill="none" stroke="#9c9c9c" stroke-width="1.1"/></svg>
<div class="a" style="left:28px;top:522px;width:14px;height:14px;background:#2f2f2f;"></div>
<svg style="left:28px;top:522px;" width="14" height="14" viewBox="0 0 14 14"><path d="M3 7 L6 11 L11.5 3" fill="none" stroke="#dadada" stroke-width="1.3"/></svg>
<!-- Warehouse -->
<svg style="left:49px;top:518px;" width="22" height="20" viewBox="0 0 22 20"><rect x="0.5" y="0.5" width="21" height="19" fill="#8fa6ba" stroke="#1e2a36"/><rect x="2" y="2" width="18" height="16" fill="#465a6c"/><rect x="2" y="2" width="18" height="2" fill="#c8d8e8"/><rect x="2" y="9" width="18" height="1.5" fill="#c8d8e8"/><rect x="2" y="2" width="1.5" height="16" fill="#c8d8e8"/><rect x="10" y="2" width="1.5" height="16" fill="#c8d8e8"/><rect x="18.5" y="2" width="1.5" height="16" fill="#c8d8e8"/></svg>
<svg style="left:77px;top:517px;" width="11" height="11" viewBox="0 0 11 11"><path d="M0.6 10.4 V0.6 H6 L7 2 H10.4 V10.4 Z M0.6 3.5 H10.4" fill="none" stroke="#a9b8c6" stroke-width="1.1"/><path d="M0.6 0.6 H6 L7 2 H10.4 V3.5 H0.6 Z" fill="#a9b8c6" opacity="0.35"/></svg>
<svg style="left:79px;top:529px;" width="8" height="12" viewBox="0 0 8 12"><path d="M1 0.8 L6.5 6 L1 11.2" fill="none" stroke="#dfe6ec" stroke-width="1.4"/></svg>
<div class="t" style="left:90px;top:522px;font-size:13.4px;color:#a9b8c6;font-weight:bold">Warehouse</div>
<svg style="left:240px;top:521px;" width="14" height="14" viewBox="0 0 14 14"><rect x="0.5" y="6.5" width="12.5" height="7.5" fill="#8aa2b6"/><path d="M11.8 6.5 V4.8 Q11.8 1.2 9.2 0.8" fill="none" stroke="#8aa2b6" stroke-width="1.5"/></svg>
<div class="t" style="left:258px;top:516px;font-size:19px;color:#8aa2b6;font-style:italic">α</div>
<svg style="left:277px;top:522px;" width="16" height="12" viewBox="0 0 16 12"><g fill="#8aa2b6"><rect x="0" y="0" width="7" height="3"/><rect x="8" y="0" width="8" height="3"/><rect x="0" y="4.5" width="2" height="3"/><rect x="3.5" y="4.5" width="8" height="3"/><rect x="13" y="4.5" width="3" height="3"/><rect x="0" y="9" width="7" height="3"/><rect x="8" y="9" width="8" height="3"/></g></svg>
<div class="a" style="left:1px;top:567px;width:295px;height:1px;background:#3c3c3c;"></div>
<svg style="left:6px;top:547px;" width="15" height="14" viewBox="0 0 15 14"><ellipse cx="7.5" cy="6.5" rx="6.7" ry="5.6" fill="none" stroke="#6a6a6a" stroke-width="0.8"/><path d="M1 8.5 Q7.5 14.5 14 8.5" fill="none" stroke="#9c9c9c" stroke-width="1.1"/></svg>
<div class="a" style="left:28px;top:549px;width:14px;height:14px;background:#2f2f2f;"></div>
<!-- Depot -->
<svg style="left:52px;top:546px;" width="16" height="20" viewBox="0 0 16 20"><rect width="16" height="20" fill="#8a8a8a"/><rect x="0" y="0" width="16" height="20" fill="#6a6a6a"/><rect x="1" y="1" width="14" height="2" fill="#aaa"/><rect x="1" y="1" width="1.5" height="19" fill="#bbb"/><rect x="7" y="1" width="1.5" height="19" fill="#bbb"/><rect x="13.5" y="1" width="1.5" height="19" fill="#bbb"/><rect x="3" y="15" width="3" height="3" fill="#3070b0"/><rect x="10" y="15" width="3" height="3" fill="#3070b0"/></svg>
<svg style="left:77px;top:544px;" width="11" height="11" viewBox="0 0 11 11"><path d="M0.6 10.4 V0.6 H6 L7 2 H10.4 V10.4 Z M0.6 3.5 H10.4" fill="none" stroke="#8c8c8c" stroke-width="1.1"/><path d="M0.6 0.6 H6 L7 2 H10.4 V3.5 H0.6 Z" fill="#8c8c8c" opacity="0.35"/></svg>
<svg style="left:79px;top:556px;" width="8" height="12" viewBox="0 0 8 12"><path d="M1 0.8 L6.5 6 L1 11.2" fill="none" stroke="#8c8c8c" stroke-width="1.4"/></svg>
<div class="t" style="left:90px;top:549px;font-size:13.4px;color:#8c8c8c;">Depot</div>
<svg style="left:240px;top:548px;" width="14" height="14" viewBox="0 0 14 14"><rect x="0.5" y="6.5" width="12.5" height="7.5" fill="#777777"/><path d="M11.8 6.5 V4.8 Q11.8 1.2 9.2 0.8" fill="none" stroke="#777777" stroke-width="1.5"/></svg>
<div class="t" style="left:258px;top:543px;font-size:19px;color:#777777;font-style:italic">α</div>
<svg style="left:277px;top:549px;" width="16" height="12" viewBox="0 0 16 12"><g fill="#6e6e6e"><rect x="0" y="0" width="7" height="3"/><rect x="8" y="0" width="8" height="3"/><rect x="0" y="4.5" width="2" height="3"/><rect x="3.5" y="4.5" width="8" height="3"/><rect x="13" y="4.5" width="3" height="3"/><rect x="0" y="9" width="7" height="3"/><rect x="8" y="9" width="8" height="3"/></g></svg>
<div class="a" style="left:1px;top:594px;width:295px;height:1px;background:#3c3c3c;"></div>
<svg style="left:6px;top:574px;" width="15" height="14" viewBox="0 0 15 14"><ellipse cx="7.5" cy="6.5" rx="6.7" ry="5.6" fill="none" stroke="#6a6a6a" stroke-width="0.8"/><path d="M1 8.5 Q7.5 14.5 14 8.5" fill="none" stroke="#9c9c9c" stroke-width="1.1"/></svg>
<div class="a" style="left:28px;top:576px;width:14px;height:14px;background:#2f2f2f;"></div>
<!-- Vertical Farm -->
<svg style="left:53px;top:573px;" width="14" height="20" viewBox="0 0 14 20"><rect width="14" height="20" fill="#8a8a8a"/><rect x="1" y="1" width="12" height="18" fill="#9a9a9a"/><rect x="1" y="4" width="12" height="1.5" fill="#ddd"/><rect x="1" y="8" width="12" height="1.5" fill="#c08030"/><rect x="1" y="12" width="12" height="1.5" fill="#ddd"/><rect x="1" y="16" width="12" height="1.5" fill="#c08030"/></svg>
<svg style="left:77px;top:571px;" width="11" height="11" viewBox="0 0 11 11"><path d="M0.6 10.4 V0.6 H6 L7 2 H10.4 V10.4 Z M0.6 3.5 H10.4" fill="none" stroke="#8c8c8c" stroke-width="1.1"/><path d="M0.6 0.6 H6 L7 2 H10.4 V3.5 H0.6 Z" fill="#8c8c8c" opacity="0.35"/></svg>
<svg style="left:79px;top:583px;" width="8" height="12" viewBox="0 0 8 12"><path d="M1 0.8 L6.5 6 L1 11.2" fill="none" stroke="#8c8c8c" stroke-width="1.4"/></svg>
<div class="t" style="left:90px;top:576px;font-size:13.4px;color:#8c8c8c;">Vertical Farm</div>
<svg style="left:240px;top:575px;" width="14" height="14" viewBox="0 0 14 14"><rect x="0.5" y="6.5" width="12.5" height="7.5" fill="#777777"/><path d="M11.8 6.5 V4.8 Q11.8 1.2 9.2 0.8" fill="none" stroke="#777777" stroke-width="1.5"/></svg>
<div class="t" style="left:258px;top:570px;font-size:19px;color:#777777;font-style:italic">α</div>
<svg style="left:277px;top:576px;" width="16" height="12" viewBox="0 0 16 12"><g fill="#6e6e6e"><rect x="0" y="0" width="7" height="3"/><rect x="8" y="0" width="8" height="3"/><rect x="0" y="4.5" width="2" height="3"/><rect x="3.5" y="4.5" width="8" height="3"/><rect x="13" y="4.5" width="3" height="3"/><rect x="0" y="9" width="7" height="3"/><rect x="8" y="9" width="8" height="3"/></g></svg>
<div class="a" style="left:1px;top:621px;width:295px;height:1px;background:#3c3c3c;"></div>
<svg style="left:6px;top:601px;" width="15" height="14" viewBox="0 0 15 14"><ellipse cx="7.5" cy="6.5" rx="6.7" ry="5.6" fill="none" stroke="#6a6a6a" stroke-width="0.8"/><path d="M1 8.5 Q7.5 14.5 14 8.5" fill="none" stroke="#9c9c9c" stroke-width="1.1"/></svg>
<div class="a" style="left:28px;top:603px;width:14px;height:14px;background:#2f2f2f;"></div>
<!-- Town Hall -->
<svg style="left:53px;top:600px;" width="14" height="20" viewBox="0 0 14 20"><rect width="14" height="20" fill="#8a8a8a"/><rect x="1" y="2" width="12" height="6" fill="#7a8a9a"/><rect x="3" y="3" width="2" height="4" fill="#e0c070"/><rect x="8" y="3" width="2" height="4" fill="#e0c070"/><rect x="1" y="11" width="12" height="7" fill="#9aa"/><rect x="2" y="13" width="10" height="1.5" fill="#eee"/><rect x="2" y="16" width="10" height="1.5" fill="#c09040"/></svg>
<svg style="left:77px;top:598px;" width="11" height="11" viewBox="0 0 11 11"><path d="M0.6 10.4 V0.6 H6 L7 2 H10.4 V10.4 Z M0.6 3.5 H10.4" fill="none" stroke="#8c8c8c" stroke-width="1.1"/><path d="M0.6 0.6 H6 L7 2 H10.4 V3.5 H0.6 Z" fill="#8c8c8c" opacity="0.35"/></svg>
<svg style="left:79px;top:610px;" width="8" height="12" viewBox="0 0 8 12"><path d="M1 0.8 L6.5 6 L1 11.2" fill="none" stroke="#8c8c8c" stroke-width="1.4"/></svg>
<div class="t" style="left:90px;top:603px;font-size:13.4px;color:#8c8c8c;">Town Hall</div>
<svg style="left:240px;top:602px;" width="14" height="14" viewBox="0 0 14 14"><rect x="0.5" y="6.5" width="12.5" height="7.5" fill="#777777"/><path d="M11.8 6.5 V4.8 Q11.8 1.2 9.2 0.8" fill="none" stroke="#777777" stroke-width="1.5"/></svg>
<div class="t" style="left:258px;top:597px;font-size:19px;color:#777777;font-style:italic">α</div>
<svg style="left:277px;top:603px;" width="16" height="12" viewBox="0 0 16 12"><g fill="#6e6e6e"><rect x="0" y="0" width="7" height="3"/><rect x="8" y="0" width="8" height="3"/><rect x="0" y="4.5" width="2" height="3"/><rect x="3.5" y="4.5" width="8" height="3"/><rect x="13" y="4.5" width="3" height="3"/><rect x="0" y="9" width="7" height="3"/><rect x="8" y="9" width="8" height="3"/></g></svg>
<div class="a" style="left:1px;top:648px;width:295px;height:1px;background:#3c3c3c;"></div>
<svg style="left:6px;top:628px;" width="15" height="14" viewBox="0 0 15 14"><path d="M0.8 7 Q7.5 -1.5 14.2 7" fill="none" stroke="#dadada" stroke-width="1.1"/><path d="M0.8 8 Q7.5 16 14.2 8" fill="none" stroke="#dadada" stroke-width="1.3"/><circle cx="7.5" cy="5.3" r="3.6" fill="#dadada"/></svg>
<div class="a" style="left:28px;top:630px;width:14px;height:14px;background:#2f2f2f;"></div>
<!-- Bazaar -->
<svg style="left:50px;top:628px;" width="20" height="16" viewBox="0 0 20 16"><rect width="20" height="16" fill="#f0f0f0"/><rect x="0" y="1" width="20" height="1.5" fill="#c08a20"/><rect x="0" y="8" width="20" height="1.5" fill="#222"/><rect x="8" y="1" width="1" height="15" fill="#888"/><rect x="16.5" y="4" width="3" height="12" fill="#b07a10"/><rect x="3" y="3" width="3" height="2" fill="#d09a30"/><rect x="11" y="3" width="3" height="2" fill="#d09a30"/><rect x="3" y="10" width="3" height="2" fill="#d09a30"/><rect x="1" y="12" width="1.5" height="1.5" fill="#111"/></svg>
<svg style="left:77px;top:625px;" width="11" height="11" viewBox="0 0 11 11"><path d="M0.6 10.4 V0.6 H6 L7 2 H10.4 V10.4 Z M0.6 3.5 H10.4" fill="none" stroke="#dadada" stroke-width="1.1"/><path d="M0.6 0.6 H6 L7 2 H10.4 V3.5 H0.6 Z" fill="#dadada" opacity="0.35"/></svg>
<svg style="left:79px;top:637px;" width="8" height="12" viewBox="0 0 8 12"><path d="M1 0.8 L6.5 6 L1 11.2" fill="none" stroke="#dadada" stroke-width="1.4"/></svg>
<div class="t" style="left:90px;top:630px;font-size:13.4px;color:#dadada;">Bazaar</div>
<svg style="left:240px;top:629px;" width="14" height="14" viewBox="0 0 14 14"><rect x="0.5" y="6.5" width="12.5" height="7.5" fill="#777777"/><path d="M11.8 6.5 V4.8 Q11.8 1.2 9.2 0.8" fill="none" stroke="#777777" stroke-width="1.5"/></svg>
<div class="t" style="left:258px;top:624px;font-size:19px;color:#777777;font-style:italic">α</div>
<svg style="left:277px;top:630px;" width="16" height="12" viewBox="0 0 16 12"><g fill="#6e6e6e"><rect x="0" y="0" width="7" height="3"/><rect x="8" y="0" width="8" height="3"/><rect x="0" y="4.5" width="2" height="3"/><rect x="3.5" y="4.5" width="8" height="3"/><rect x="13" y="4.5" width="3" height="3"/><rect x="0" y="9" width="7" height="3"/><rect x="8" y="9" width="8" height="3"/></g></svg>
<div class="a" style="left:1px;top:675px;width:295px;height:1px;background:#3c3c3c;"></div>
<svg style="left:6px;top:655px;" width="15" height="14" viewBox="0 0 15 14"><ellipse cx="7.5" cy="6.5" rx="6.7" ry="5.6" fill="none" stroke="#6a6a6a" stroke-width="0.8"/><path d="M1 8.5 Q7.5 14.5 14 8.5" fill="none" stroke="#9c9c9c" stroke-width="1.1"/></svg>
<div class="a" style="left:28px;top:657px;width:14px;height:14px;background:#2f2f2f;"></div>
<!-- Observatory -->
<svg style="left:52px;top:654px;" width="15" height="20" viewBox="0 0 15 20"><rect width="15" height="20" fill="#8c8c8c"/><g fill="#767676"><rect x="0" y="0" width="4" height="4"/><rect x="8" y="0" width="4" height="4"/><rect x="4" y="4" width="4" height="4"/><rect x="12" y="4" width="3" height="4"/><rect x="0" y="8" width="4" height="4"/><rect x="8" y="8" width="4" height="4"/><rect x="4" y="12" width="4" height="4"/><rect x="12" y="12" width="3" height="4"/><rect x="0" y="16" width="4" height="4"/><rect x="8" y="16" width="4" height="4"/></g><rect x="4" y="2" width="1.5" height="5" fill="#3a9a7a"/><rect x="7" y="3" width="1.5" height="2" fill="#3a9a7a"/><rect x="2" y="16" width="1" height="3" fill="#c07030"/></svg>
<svg style="left:77px;top:652px;" width="11" height="11" viewBox="0 0 11 11"><path d="M0.6 10.4 V0.6 H6 L7 2 H10.4 V10.4 Z M0.6 3.5 H10.4" fill="none" stroke="#8c8c8c" stroke-width="1.1"/><path d="M0.6 0.6 H6 L7 2 H10.4 V3.5 H0.6 Z" fill="#8c8c8c" opacity="0.35"/></svg>
<svg style="left:79px;top:664px;" width="8" height="12" viewBox="0 0 8 12"><path d="M1 0.8 L6.5 6 L1 11.2" fill="none" stroke="#8c8c8c" stroke-width="1.4"/></svg>
<div class="t" style="left:90px;top:657px;font-size:13.4px;color:#8c8c8c;">Observatory</div>
<svg style="left:240px;top:656px;" width="14" height="14" viewBox="0 0 14 14"><rect x="0.5" y="6.5" width="12.5" height="7.5" fill="#777777"/><path d="M11.8 6.5 V4.8 Q11.8 1.2 9.2 0.8" fill="none" stroke="#777777" stroke-width="1.5"/></svg>
<div class="t" style="left:258px;top:651px;font-size:19px;color:#777777;font-style:italic">α</div>
<svg style="left:277px;top:657px;" width="16" height="12" viewBox="0 0 16 12"><g fill="#6e6e6e"><rect x="0" y="0" width="7" height="3"/><rect x="8" y="0" width="8" height="3"/><rect x="0" y="4.5" width="2" height="3"/><rect x="3.5" y="4.5" width="8" height="3"/><rect x="13" y="4.5" width="3" height="3"/><rect x="0" y="9" width="7" height="3"/><rect x="8" y="9" width="8" height="3"/></g></svg>
<div class="a" style="left:1px;top:702px;width:295px;height:1px;background:#3c3c3c;"></div>
<svg style="left:6px;top:682px;" width="15" height="14" viewBox="0 0 15 14"><ellipse cx="7.5" cy="6.5" rx="6.7" ry="5.6" fill="none" stroke="#6a6a6a" stroke-width="0.8"/><path d="M1 8.5 Q7.5 14.5 14 8.5" fill="none" stroke="#9c9c9c" stroke-width="1.1"/></svg>
<div class="a" style="left:28px;top:684px;width:14px;height:14px;background:#2f2f2f;"></div>
<!-- Blue BG -->
<div class="a" style="left:50px;top:681px;width:20px;height:18px;background:#7a9ab4;"></div>
<svg style="left:77px;top:680px;" width="12" height="12" viewBox="0 0 12 12"><path d="M3 0.6 H11.4 V9 M0.6 2.5 L6.5 8.5 M6.5 4.5 V8.5 H2.5" fill="none" stroke="#8c8c8c" stroke-width="1.1"/></svg>
<div class="t" style="left:90px;top:684px;font-size:13.4px;color:#8c8c8c;">Blue BG</div>
<svg style="left:240px;top:683px;" width="14" height="14" viewBox="0 0 14 14"><rect x="0.5" y="6.5" width="12.5" height="7.5" fill="#777777"/><path d="M11.8 6.5 V4.8 Q11.8 1.2 9.2 0.8" fill="none" stroke="#777777" stroke-width="1.5"/></svg>
<div class="t" style="left:258px;top:678px;font-size:19px;color:#777777;font-style:italic">α</div>
<svg style="left:277px;top:682px;" width="15" height="15" viewBox="0 0 15 15"><rect width="15" height="15" fill="#4e4e4e"/><g fill="#6a6a6a"><rect x="5" y="0" width="5" height="5"/><rect x="0" y="5" width="5" height="5"/><rect x="10" y="5" width="5" height="5"/><rect x="5" y="10" width="5" height="5"/></g></svg>
<div class="a" style="left:1px;top:729px;width:295px;height:1px;background:#3c3c3c;"></div>
<svg style="left:6px;top:709px;" width="15" height="14" viewBox="0 0 15 14"><path d="M0.8 7 Q7.5 -1.5 14.2 7" fill="none" stroke="#dadada" stroke-width="1.1"/><path d="M0.8 8 Q7.5 16 14.2 8" fill="none" stroke="#dadada" stroke-width="1.3"/><circle cx="7.5" cy="5.3" r="3.6" fill="#dadada"/></svg>
<div class="a" style="left:28px;top:711px;width:14px;height:14px;background:#2f2f2f;"></div>
<!-- Black BG -->
<div class="a" style="left:50px;top:708px;width:20px;height:18px;background:#000000;"></div>
<svg style="left:77px;top:707px;" width="12" height="12" viewBox="0 0 12 12"><path d="M3 0.6 H11.4 V9 M0.6 2.5 L6.5 8.5 M6.5 4.5 V8.5 H2.5" fill="none" stroke="#dadada" stroke-width="1.1"/></svg>
<div class="t" style="left:90px;top:711px;font-size:13.4px;color:#dadada;">Black BG</div>
<svg style="left:240px;top:710px;" width="14" height="14" viewBox="0 0 14 14"><rect x="0.5" y="6.5" width="12.5" height="7.5" fill="#777777"/><path d="M11.8 6.5 V4.8 Q11.8 1.2 9.2 0.8" fill="none" stroke="#777777" stroke-width="1.5"/></svg>
<div class="t" style="left:258px;top:705px;font-size:19px;color:#777777;font-style:italic">α</div>
<svg style="left:277px;top:709px;" width="15" height="15" viewBox="0 0 15 15"><rect width="15" height="15" fill="#4e4e4e"/><g fill="#6a6a6a"><rect x="5" y="0" width="5" height="5"/><rect x="0" y="5" width="5" height="5"/><rect x="10" y="5" width="5" height="5"/><rect x="5" y="10" width="5" height="5"/></g></svg>
<svg style="left:301px;top:489px;" width="2" height="18" viewBox="0 0 2 18"><rect x="0" y="0" width="2" height="2" fill="#9a9a9a"/><rect x="0" y="3" width="2" height="2" fill="#9a9a9a"/><rect x="0" y="6" width="2" height="2" fill="#9a9a9a"/><rect x="0" y="9" width="2" height="2" fill="#9a9a9a"/><rect x="0" y="12" width="2" height="2" fill="#9a9a9a"/><rect x="0" y="15" width="2" height="2" fill="#9a9a9a"/></svg>
<svg style="left:7px;top:840px;" width="18" height="18" viewBox="0 0 18 18"><path d="M9 0 V18 M0 9 H18" stroke="#dadada" stroke-width="1.8"/></svg>
<svg style="left:34px;top:847px;" width="10" height="6" viewBox="0 0 10 6"><path d="M0 0 H9 L4.5 4.5 Z" fill="#9a9a9a"/></svg>
<svg style="left:53px;top:839px;" width="20" height="20" viewBox="0 0 20 20"><path d="M0.9 4 V19.1 H16" fill="none" stroke="#dadada" stroke-width="1.6"/><rect x="4" y="0.9" width="15" height="15" fill="none" stroke="#dadada" stroke-width="1.6"/></svg>
<svg style="left:85px;top:842px;" width="21" height="12" viewBox="0 0 21 12"><path d="M1 1 L10.5 10 L20 1" fill="none" stroke="#dadada" stroke-width="1.6"/></svg>
<svg style="left:117px;top:842px;" width="21" height="12" viewBox="0 0 21 12"><path d="M1 11 L10.5 2 L20 11" fill="none" stroke="#dadada" stroke-width="1.6"/></svg>
<svg style="left:149px;top:840px;" width="20" height="17" viewBox="0 0 20 17"><path d="M0 2.5 H20 M0 8.5 H20 M0 14.5 H20" stroke="#dadada" stroke-width="1.6"/><rect x="13" y="0.5" width="3" height="4" fill="#dadada"/><rect x="3" y="6.5" width="3" height="4" fill="#dadada"/><rect x="9" y="12.5" width="3" height="4" fill="#dadada"/></svg>
<svg style="left:177px;top:847px;" width="10" height="6" viewBox="0 0 10 6"><path d="M0 0 H9 L4.5 4.5 Z" fill="#9a9a9a"/></svg>
<svg style="left:272px;top:839px;" width="18" height="20" viewBox="0 0 18 20"><path d="M0 4 H18 M5.5 4 V1 H12.5 V4" fill="none" stroke="#dadada" stroke-width="1.6"/><path d="M2 6 H16 L15 18 Q15 19.5 13.5 19.5 H4.5 Q3 19.5 3 18 Z" fill="#dadada"/></svg>
<div class="a" style="left:304px;top:165px;width:1616px;height:1px;background:#3a3a3a;"></div>
<div class="a" style="left:305px;top:126px;width:808px;height:40px;background:#484848;border:1px solid #383838;border-bottom:none;border-radius:4px 4px 0 0;box-shadow:inset 0 1px 0 #565656"></div>
<div class="a" style="left:320.85px;top:136.85px;width:16.3px;height:16.3px;border-radius:50%;background:conic-gradient(from 20deg,#ff10ff,#ff6a9a 60deg,#ffc040 100deg,#ffff00 135deg,#80ff60 170deg,#00ffd0 200deg,#00f0ff 230deg,#60a0ff 280deg,#b070ff 320deg,#ff10ff 360deg)"></div>
<div class="a" style="left:320.85px;top:136.85px;width:16.3px;height:16.3px;border-radius:50%;background:radial-gradient(circle at 55% 60%,rgba(120,170,230,0.85) 0,rgba(120,170,230,0.4) 30%,rgba(255,255,255,0) 62%)"></div>
<svg style="left:320px;top:136px;" width="18" height="18" viewBox="0 0 18 18"><line x1="0.5" y1="0.5" x2="10" y2="10" stroke="#333" stroke-width="2.2"/><line x1="9.5" y1="9.5" x2="11.5" y2="11.5" stroke="#bbb" stroke-width="2.2"/><path d="M11 11.5 L13 10 L15 12.5 L13.5 15 Z" fill="#111"/></svg>
<div class="t" style="left:591px;top:139px;font-size:14px;color:#e0e0e0;">structures_384x384.kra (41.1 MiB) *</div>
<svg style="left:1075px;top:140px;" width="16" height="16" viewBox="0 0 16 16"><path d="M1 1 L15 15 M15 1 L1 15" stroke="#dadada" stroke-width="2.2"/></svg>
<div class="a" style="left:1113px;top:128px;width:806px;height:38px;background:#434343;border:1px solid #383838;border-bottom:none;border-radius:4px 4px 0 0;box-shadow:inset 0 1px 0 #525252"></div>
<div class="a" style="left:1128.85px;top:137.85px;width:16.3px;height:16.3px;border-radius:50%;background:conic-gradient(from 20deg,#ff10ff,#ff6a9a 60deg,#ffc040 100deg,#ffff00 135deg,#80ff60 170deg,#00ffd0 200deg,#00f0ff 230deg,#60a0ff 280deg,#b070ff 320deg,#ff10ff 360deg)"></div>
<div class="a" style="left:1128.85px;top:137.85px;width:16.3px;height:16.3px;border-radius:50%;background:radial-gradient(circle at 55% 60%,rgba(120,170,230,0.85) 0,rgba(120,170,230,0.4) 30%,rgba(255,255,255,0) 62%)"></div>
<svg style="left:1128px;top:137px;" width="18" height="18" viewBox="0 0 18 18"><line x1="0.5" y1="0.5" x2="10" y2="10" stroke="#333" stroke-width="2.2"/><line x1="9.5" y1="9.5" x2="11.5" y2="11.5" stroke="#bbb" stroke-width="2.2"/><path d="M11 11.5 L13 10 L15 12.5 L13.5 15 Z" fill="#111"/></svg>
<div class="t" style="left:1402px;top:140px;font-size:14px;color:#e0e0e0;">structures_256x256.kra (39.9 MiB)</div>
<svg style="left:1883px;top:141px;" width="16" height="16" viewBox="0 0 16 16"><path d="M1 1 L15 15 M15 1 L1 15" stroke="#dadada" stroke-width="2.2"/></svg>
<div class="a" style="left:326px;top:166px;width:1594px;height:22px;background:#3f3f3f;"></div>
<div class="a" style="left:305px;top:188px;width:21px;height:677px;background:#3c3c3c;"></div>
<div class="a" style="left:711px;top:166px;width:515px;height:22px;background:#2f2f2f;"></div>
<div class="a" style="left:305px;top:286px;width:21px;height:517px;background:#2f2f2f;"></div>
<svg style="left:0px;top:0px;pointer-events:none" width="1920" height="1032" viewBox="0 0 1920 1032"><rect x="711" y="181" width="1" height="6" fill="#dcdcdc"/><rect x="744" y="181" width="1" height="6" fill="#dcdcdc"/><rect x="777" y="181" width="1" height="6" fill="#dcdcdc"/><rect x="811" y="181" width="1" height="6" fill="#dcdcdc"/><rect x="844" y="181" width="1" height="6" fill="#dcdcdc"/><rect x="877" y="181" width="1" height="6" fill="#dcdcdc"/><rect x="911" y="181" width="1" height="6" fill="#dcdcdc"/><rect x="944" y="181" width="1" height="6" fill="#dcdcdc"/><rect x="977" y="181" width="1" height="6" fill="#dcdcdc"/><rect x="1011" y="181" width="1" height="6" fill="#dcdcdc"/><rect x="1044" y="181" width="1" height="6" fill="#dcdcdc"/><rect x="1077" y="181" width="1" height="6" fill="#dcdcdc"/><rect x="1111" y="181" width="1" height="6" fill="#dcdcdc"/><rect x="1144" y="181" width="1" height="6" fill="#dcdcdc"/><rect x="1177" y="181" width="1" height="6" fill="#dcdcdc"/><rect x="1211" y="181" width="1" height="6" fill="#dcdcdc"/><rect x="727" y="184" width="1" height="3" fill="#dcdcdc"/><rect x="761" y="184" width="1" height="3" fill="#dcdcdc"/><rect x="794" y="184" width="1" height="3" fill="#dcdcdc"/><rect x="827" y="184" width="1" height="3" fill="#dcdcdc"/><rect x="861" y="184" width="1" height="3" fill="#dcdcdc"/><rect x="894" y="184" width="1" height="3" fill="#dcdcdc"/><rect x="927" y="184" width="1" height="3" fill="#dcdcdc"/><rect x="961" y="184" width="1" height="3" fill="#dcdcdc"/><rect x="994" y="184" width="1" height="3" fill="#dcdcdc"/><rect x="1027" y="184" width="1" height="3" fill="#dcdcdc"/><rect x="1061" y="184" width="1" height="3" fill="#dcdcdc"/><rect x="1094" y="184" width="1" height="3" fill="#dcdcdc"/><rect x="1127" y="184" width="1" height="3" fill="#dcdcdc"/><rect x="1161" y="184" width="1" height="3" fill="#dcdcdc"/><rect x="1194" y="184" width="1" height="3" fill="#dcdcdc"/></svg>
<div class="t" style="left:680.5px;top:170px;width:60px;text-align:center;font-size:12px;color:#e0e0e0">0</div>
<div class="t" style="left:747.2px;top:170px;width:60px;text-align:center;font-size:12px;color:#e0e0e0">50</div>
<div class="t" style="left:813.8px;top:170px;width:60px;text-align:center;font-size:12px;color:#e0e0e0">100</div>
<div class="t" style="left:880.5px;top:170px;width:60px;text-align:center;font-size:12px;color:#e0e0e0">150</div>
<div class="t" style="left:947.2px;top:170px;width:60px;text-align:center;font-size:12px;color:#e0e0e0">200</div>
<div class="t" style="left:1013.8px;top:170px;width:60px;text-align:center;font-size:12px;color:#e0e0e0">250</div>
<div class="t" style="left:1080.5px;top:170px;width:60px;text-align:center;font-size:12px;color:#e0e0e0">300</div>
<div class="t" style="left:1147.2px;top:170px;width:60px;text-align:center;font-size:12px;color:#e0e0e0">350</div>
<svg style="left:0px;top:0px;" width="1920" height="1032" viewBox="0 0 1920 1032"><rect x="319" y="288" width="6" height="1" fill="#dcdcdc"/><rect x="319" y="321" width="6" height="1" fill="#dcdcdc"/><rect x="319" y="354" width="6" height="1" fill="#dcdcdc"/><rect x="319" y="388" width="6" height="1" fill="#dcdcdc"/><rect x="319" y="421" width="6" height="1" fill="#dcdcdc"/><rect x="319" y="454" width="6" height="1" fill="#dcdcdc"/><rect x="319" y="488" width="6" height="1" fill="#dcdcdc"/><rect x="319" y="521" width="6" height="1" fill="#dcdcdc"/><rect x="319" y="554" width="6" height="1" fill="#dcdcdc"/><rect x="319" y="588" width="6" height="1" fill="#dcdcdc"/><rect x="319" y="621" width="6" height="1" fill="#dcdcdc"/><rect x="319" y="654" width="6" height="1" fill="#dcdcdc"/><rect x="319" y="688" width="6" height="1" fill="#dcdcdc"/><rect x="319" y="721" width="6" height="1" fill="#dcdcdc"/><rect x="319" y="754" width="6" height="1" fill="#dcdcdc"/><rect x="319" y="788" width="6" height="1" fill="#dcdcdc"/><rect x="322" y="304" width="3" height="1" fill="#dcdcdc"/><rect x="322" y="338" width="3" height="1" fill="#dcdcdc"/><rect x="322" y="371" width="3" height="1" fill="#dcdcdc"/><rect x="322" y="404" width="3" height="1" fill="#dcdcdc"/><rect x="322" y="438" width="3" height="1" fill="#dcdcdc"/><rect x="322" y="471" width="3" height="1" fill="#dcdcdc"/><rect x="322" y="504" width="3" height="1" fill="#dcdcdc"/><rect x="322" y="538" width="3" height="1" fill="#dcdcdc"/><rect x="322" y="571" width="3" height="1" fill="#dcdcdc"/><rect x="322" y="604" width="3" height="1" fill="#dcdcdc"/><rect x="322" y="638" width="3" height="1" fill="#dcdcdc"/><rect x="322" y="671" width="3" height="1" fill="#dcdcdc"/><rect x="322" y="704" width="3" height="1" fill="#dcdcdc"/><rect x="322" y="738" width="3" height="1" fill="#dcdcdc"/><rect x="322" y="771" width="3" height="1" fill="#dcdcdc"/></svg>
<div class="t" style="left:285px;top:282.0px;width:60px;text-align:center;font-size:12px;color:#e0e0e0;transform:rotate(-90deg);transform-origin:30px 6px">0</div>
<div class="t" style="left:285px;top:348.7px;width:60px;text-align:center;font-size:12px;color:#e0e0e0;transform:rotate(-90deg);transform-origin:30px 6px">50</div>
<div class="t" style="left:285px;top:415.3px;width:60px;text-align:center;font-size:12px;color:#e0e0e0;transform:rotate(-90deg);transform-origin:30px 6px">100</div>
<div class="t" style="left:285px;top:482.0px;width:60px;text-align:center;font-size:12px;color:#e0e0e0;transform:rotate(-90deg);transform-origin:30px 6px">150</div>
<div class="t" style="left:285px;top:548.7px;width:60px;text-align:center;font-size:12px;color:#e0e0e0;transform:rotate(-90deg);transform-origin:30px 6px">200</div>
<div class="t" style="left:285px;top:615.3px;width:60px;text-align:center;font-size:12px;color:#e0e0e0;transform:rotate(-90deg);transform-origin:30px 6px">250</div>
<div class="t" style="left:285px;top:682.0px;width:60px;text-align:center;font-size:12px;color:#e0e0e0;transform:rotate(-90deg);transform-origin:30px 6px">300</div>
<div class="t" style="left:285px;top:748.7px;width:60px;text-align:center;font-size:12px;color:#e0e0e0;transform:rotate(-90deg);transform-origin:30px 6px">350</div>
<div class="a" style="left:305px;top:668px;width:21px;height:1px;background:#e0e0e0;"></div>
<div class="a" style="left:326px;top:188px;width:1577px;height:660px;background:#808080;"></div>
<div class="a" style="left:1903px;top:188px;width:17px;height:660px;background:#3c3c3c;"></div>
<div class="a" style="left:1903px;top:188px;width:16px;height:16px;border:1px solid #5a5a5a;background:#474747"></div>
<svg style="left:1906px;top:193px;" width="10" height="6" viewBox="0 0 10 6"><path d="M0 5.5 L5 0.5 L10 5.5 Z" fill="#b0b0b0"/></svg>
<div class="a" style="left:1903px;top:387px;width:16px;height:243px;border:1px solid #5a5a5a;background:#444"></div>
<div class="a" style="left:1903px;top:832px;width:16px;height:16px;border:1px solid #5a5a5a;background:#474747"></div>
<svg style="left:1906px;top:837px;" width="10" height="6" viewBox="0 0 10 6"><path d="M0 0.5 L5 5.5 L10 0.5 Z" fill="#b0b0b0"/></svg>
<div class="a" style="left:326px;top:848px;width:1577px;height:17px;background:#3c3c3c;"></div>
<div class="a" style="left:326px;top:849px;width:16px;height:16px;border:1px solid #5a5a5a;background:#474747"></div>
<svg style="left:331px;top:852px;" width="6" height="10" viewBox="0 0 6 10"><path d="M5.5 0 L0.5 5 L5.5 10 Z" fill="#b0b0b0"/></svg>
<div class="a" style="left:820px;top:849px;width:726px;height:16px;border:1px solid #5a5a5a;background:#444"></div>
<div class="a" style="left:1887px;top:849px;width:16px;height:16px;border:1px solid #5a5a5a;background:#474747"></div>
<svg style="left:1892px;top:852px;" width="6" height="10" viewBox="0 0 6 10"><path d="M0.5 0 L5.5 5 L0.5 10 Z" fill="#b0b0b0"/></svg>
<svg style="left:953px;top:868px;" width="18" height="2" viewBox="0 0 18 2"><rect x="0" y="0" width="2" height="2" fill="#9a9a9a"/><rect x="3" y="0" width="2" height="2" fill="#9a9a9a"/><rect x="6" y="0" width="2" height="2" fill="#9a9a9a"/><rect x="9" y="0" width="2" height="2" fill="#9a9a9a"/><rect x="12" y="0" width="2" height="2" fill="#9a9a9a"/><rect x="15" y="0" width="2" height="2" fill="#9a9a9a"/></svg>
<svg style="left:474px;top:639px;" width="58" height="58" viewBox="0 0 58 58"><circle cx="29" cy="29" r="27.5" fill="none" stroke="#3c8a3c" stroke-width="1.1"/></svg>
<svg style="left:0px;top:0px;" width="1920" height="1032" viewBox="0 0 1920 1032"><rect x="710" y="287" width="512" height="512" fill="#000"/><line x1="803" y1="457.5" x2="959" y2="457.5" stroke="#c9922f" stroke-width="4.5" stroke-linecap="round"/><line x1="803" y1="480.5" x2="959" y2="480.5" stroke="#c9922f" stroke-width="4.5" stroke-linecap="round"/><line x1="973" y1="457.5" x2="1129" y2="457.5" stroke="#c9922f" stroke-width="4.5" stroke-linecap="round"/><line x1="973" y1="480.5" x2="1129" y2="480.5" stroke="#c9922f" stroke-width="4.5" stroke-linecap="round"/><line x1="827" y1="482" x2="959" y2="542" stroke="#c9922f" stroke-width="4" stroke-linecap="round"/><line x1="845" y1="482" x2="959" y2="535" stroke="#c9922f" stroke-width="4" stroke-linecap="round"/><line x1="931" y1="482" x2="803" y2="544" stroke="#c9922f" stroke-width="4" stroke-linecap="round"/><line x1="912" y1="482" x2="803" y2="536" stroke="#c9922f" stroke-width="4" stroke-linecap="round"/><line x1="999" y1="482" x2="1129" y2="542" stroke="#c9922f" stroke-width="4" stroke-linecap="round"/><line x1="1017" y1="482" x2="1129" y2="535" stroke="#c9922f" stroke-width="4" stroke-linecap="round"/><line x1="1103" y1="482" x2="973.5" y2="544" stroke="#c9922f" stroke-width="4" stroke-linecap="round"/><line x1="1084" y1="482" x2="973.5" y2="536" stroke="#c9922f" stroke-width="4" stroke-linecap="round"/><line x1="803" y1="628.8" x2="959" y2="628.8" stroke="#c9922f" stroke-width="4.5" stroke-linecap="round"/><line x1="803" y1="651.0" x2="959" y2="651.0" stroke="#c9922f" stroke-width="4.5" stroke-linecap="round"/><line x1="973" y1="628.8" x2="1129" y2="628.8" stroke="#c9922f" stroke-width="4.5" stroke-linecap="round"/><line x1="973" y1="651.0" x2="1129" y2="651.0" stroke="#c9922f" stroke-width="4.5" stroke-linecap="round"/><line x1="827" y1="652.5" x2="959" y2="712.5" stroke="#c9922f" stroke-width="4" stroke-linecap="round"/><line x1="845" y1="652.5" x2="959" y2="705.5" stroke="#c9922f" stroke-width="4" stroke-linecap="round"/><line x1="931" y1="652.5" x2="803" y2="714.5" stroke="#c9922f" stroke-width="4" stroke-linecap="round"/><line x1="912" y1="652.5" x2="803" y2="706.5" stroke="#c9922f" stroke-width="4" stroke-linecap="round"/><line x1="999" y1="652.5" x2="1129" y2="712.5" stroke="#c9922f" stroke-width="4" stroke-linecap="round"/><line x1="1017" y1="652.5" x2="1129" y2="705.5" stroke="#c9922f" stroke-width="4" stroke-linecap="round"/><line x1="1103" y1="652.5" x2="973.5" y2="714.5" stroke="#c9922f" stroke-width="4" stroke-linecap="round"/><line x1="1084" y1="652.5" x2="973.5" y2="706.5" stroke="#c9922f" stroke-width="4" stroke-linecap="round"/><path d="M789.3 800 V458.5 Q789.3 456 791.8 456 H798.1 Q800.6 456 800.6 458.5 V800" fill="none" stroke="#a9a9a9" stroke-width="3.8"/><path d="M961 800 V458.5 Q961 456 963.5 456 H968.2 Q970.7 456 970.7 458.5 V800" fill="none" stroke="#a9a9a9" stroke-width="3.8"/><path d="M1131.2 800 V458.5 Q1131.2 456 1133.7 456 H1138.1 Q1140.6 456 1140.6 458.5 V800" fill="none" stroke="#a9a9a9" stroke-width="3.8"/><line x1="1143" y1="533" x2="1219" y2="533" stroke="#c9922f" stroke-width="3.8" stroke-linecap="round"/><line x1="1143" y1="542.5" x2="1210" y2="542.5" stroke="#c9922f" stroke-width="3.8" stroke-linecap="round"/><line x1="1210" y1="533" x2="1210" y2="705" stroke="#c9922f" stroke-width="3.6" stroke-linecap="round"/><line x1="1218" y1="533" x2="1218" y2="705" stroke="#c9922f" stroke-width="3.6" stroke-linecap="round"/><line x1="1143" y1="544" x2="1209" y2="572" stroke="#c9922f" stroke-width="3.4" stroke-linecap="round"/><line x1="1143" y1="551" x2="1209" y2="580" stroke="#c9922f" stroke-width="3.2" stroke-linecap="round"/><rect x="1144.5" y="603.5" width="35" height="19" fill="none" stroke="#5a3a0f" stroke-width="3.4"/><path d="M1145 604 L1162 622 M1162 604 L1145 622 M1162 604 L1179 622 M1179 604 L1162 622 M1162 603 V623" stroke="#5a3a0f" stroke-width="3.2"/><line x1="1178" y1="601" x2="1178" y2="676" stroke="#5a3a0f" stroke-width="3.6" stroke-linecap="round"/><line x1="1143" y1="627" x2="1176" y2="627" stroke="#c9922f" stroke-width="3.6" stroke-linecap="round"/><line x1="1143" y1="639" x2="1176" y2="639" stroke="#c9922f" stroke-width="3.6" stroke-linecap="round"/><line x1="1143" y1="650" x2="1176" y2="650" stroke="#c9922f" stroke-width="3.6" stroke-linecap="round"/><line x1="1143" y1="661" x2="1176" y2="661" stroke="#c9922f" stroke-width="3.6" stroke-linecap="round"/><line x1="1143" y1="672" x2="1176" y2="672" stroke="#c9922f" stroke-width="3.6" stroke-linecap="round"/><rect x="1144.5" y="677.5" width="72" height="22" fill="none" stroke="#5a3a0f" stroke-width="3.4"/><path d="M1144.5 678 L1162.5 699 M1162.5 678 L1144.5 699 M1162.5 677 V700 M1162.5 678 L1180.5 699 M1180.5 678 L1162.5 699 M1180.5 677 V700 M1180.5 678 L1198.5 699 M1198.5 678 L1180.5 699 M1198.5 677 V700 M1198.5 678 L1216.5 699 M1216.5 678 L1198.5 699 M1216.5 677 V700 " stroke="#5a3a0f" stroke-width="3.2" fill="none"/><line x1="1143" y1="704" x2="1219" y2="704" stroke="#c9922f" stroke-width="3.8" stroke-linecap="round"/><line x1="1143" y1="713.3" x2="1219" y2="713.3" stroke="#c9922f" stroke-width="3.8" stroke-linecap="round"/><line x1="1178" y1="715" x2="1178" y2="799" stroke="#c9922f" stroke-width="3.6" stroke-linecap="round"/><line x1="1216" y1="715" x2="1216" y2="799" stroke="#c9922f" stroke-width="3.6" stroke-linecap="round"/><line x1="1180" y1="722.4" x2="1214" y2="722.4" stroke="#c9922f" stroke-width="3.4" stroke-linecap="round"/><line x1="1179" y1="722.4" x2="1186" y2="722.4" stroke="#a9a9a9" stroke-width="3.4" stroke-linecap="round"/><line x1="1208" y1="722.4" x2="1215" y2="722.4" stroke="#a9a9a9" stroke-width="3.4" stroke-linecap="round"/><line x1="1180" y1="734" x2="1214" y2="734" stroke="#c9922f" stroke-width="3.4" stroke-linecap="round"/><line x1="1179" y1="734" x2="1186" y2="734" stroke="#a9a9a9" stroke-width="3.4" stroke-linecap="round"/><line x1="1208" y1="734" x2="1215" y2="734" stroke="#a9a9a9" stroke-width="3.4" stroke-linecap="round"/><line x1="1180" y1="744.6" x2="1214" y2="744.6" stroke="#c9922f" stroke-width="3.4" stroke-linecap="round"/><line x1="1179" y1="744.6" x2="1186" y2="744.6" stroke="#a9a9a9" stroke-width="3.4" stroke-linecap="round"/><line x1="1208" y1="744.6" x2="1215" y2="744.6" stroke="#a9a9a9" stroke-width="3.4" stroke-linecap="round"/><line x1="1180" y1="756.5" x2="1214" y2="756.5" stroke="#c9922f" stroke-width="3.4" stroke-linecap="round"/><line x1="1179" y1="756.5" x2="1186" y2="756.5" stroke="#a9a9a9" stroke-width="3.4" stroke-linecap="round"/><line x1="1208" y1="756.5" x2="1215" y2="756.5" stroke="#a9a9a9" stroke-width="3.4" stroke-linecap="round"/><line x1="1180" y1="768" x2="1214" y2="768" stroke="#c9922f" stroke-width="3.4" stroke-linecap="round"/><line x1="1179" y1="768" x2="1186" y2="768" stroke="#a9a9a9" stroke-width="3.4" stroke-linecap="round"/><line x1="1208" y1="768" x2="1215" y2="768" stroke="#a9a9a9" stroke-width="3.4" stroke-linecap="round"/><line x1="1180" y1="779.4" x2="1214" y2="779.4" stroke="#c9922f" stroke-width="3.4" stroke-linecap="round"/><line x1="1179" y1="779.4" x2="1186" y2="779.4" stroke="#a9a9a9" stroke-width="3.4" stroke-linecap="round"/><line x1="1208" y1="779.4" x2="1215" y2="779.4" stroke="#a9a9a9" stroke-width="3.4" stroke-linecap="round"/><line x1="1180" y1="789.7" x2="1214" y2="789.7" stroke="#c9922f" stroke-width="3.4" stroke-linecap="round"/><line x1="1179" y1="789.7" x2="1186" y2="789.7" stroke="#a9a9a9" stroke-width="3.4" stroke-linecap="round"/><line x1="1208" y1="789.7" x2="1215" y2="789.7" stroke="#a9a9a9" stroke-width="3.4" stroke-linecap="round"/></svg>
<div class="t" style="left:11px;top:883px;font-size:13.8px;color:#e2e2e2;">Animation Timeline</div>
<svg style="left:167px;top:879px;" width="16" height="16" viewBox="0 0 16 16"><rect x="0.5" y="0.5" width="2" height="15" fill="#dadada"/><path d="M13 1 L5 8 L13 15 Z" fill="#dadada"/><rect x="13.5" y="0.5" width="2" height="15" fill="#dadada"/></svg>
<svg style="left:199px;top:879px;" width="13" height="16" viewBox="0 0 13 16"><path d="M8.5 1 L0.5 8 L8.5 15 Z" fill="#dadada"/><rect x="10" y="0.5" width="2" height="15" fill="#dadada"/></svg>
<div class="a" style="left:229px;top:881px;width:12px;height:12px;background:#dadada;"></div>
<svg style="left:260px;top:879px;" width="10" height="16" viewBox="0 0 10 16"><path d="M0.5 1 L9 8 L0.5 15 Z" fill="#dadada"/></svg>
<svg style="left:289px;top:879px;" width="12" height="16" viewBox="0 0 12 16"><rect x="0.5" y="0.5" width="2" height="15" fill="#dadada"/><path d="M3.5 1 L11.5 8 L3.5 15 Z" fill="#dadada"/></svg>
<svg style="left:317px;top:879px;" width="16" height="16" viewBox="0 0 16 16"><rect x="0.5" y="0.5" width="2" height="15" fill="#dadada"/><path d="M3 1 L11 8 L3 15 Z" fill="#dadada"/><rect x="13" y="0.5" width="2" height="15" fill="#dadada"/></svg>
<div class="a" style="left:356px;top:875px;width:80px;height:26px;border:1px solid #2c2c2c;border-radius:3px;background:#333"></div>
<div class="a" style="left:419px;top:876px;width:1px;height:24px;background:#2c2c2c;"></div>
<div class="a" style="left:420px;top:876px;width:15px;height:24px;background:#414141;border-radius:0 2px 2px 0"></div>
<svg style="left:422px;top:878px;" width="10" height="20" viewBox="0 0 10 20"><path d="M0.5 7 L5 2.5 L9.5 7 Z M0.5 13 L5 17.5 L9.5 13 Z" fill="#8c8c8c"/></svg>
<div class="t" style="left:360px;top:882px;font-size:13px;color:#d8d8d8;">#</div>
<div class="t" style="left:375px;top:882px;font-size:14px;color:#e0e0e0;">0</div>
<div class="a" style="left:452px;top:873px;width:30px;height:28px;border:1px solid #2c2c2c;border-radius:3px;background:#3f3f3f"></div>
<svg style="left:458px;top:879px;" width="18" height="16" viewBox="0 0 18 16"><rect x="2" y="2" width="14" height="11" fill="none" stroke="#dadada" stroke-width="1.2"/><path d="M7 5 L11 7.5 L7 10 Z" fill="#dadada"/><path d="M0.5 15.5 L3 12 M15 3.5 L17.5 0" stroke="#dadada" stroke-width="1.2"/><g fill="#dadada"><rect x="2" y="4" width="1.5" height="1.5"/><rect x="2" y="7" width="1.5" height="1.5"/><rect x="2" y="10" width="1.5" height="1.5"/><rect x="14.5" y="4" width="1.5" height="1.5"/><rect x="14.5" y="7" width="1.5" height="1.5"/><rect x="14.5" y="10" width="1.5" height="1.5"/></g></svg>
<div class="a" style="left:483px;top:875px;width:114px;height:26px;border:1px solid #2c2c2c;border-radius:3px;background:#414141;overflow:hidden"><div class="a" style="left:0;top:0;width:95px;height:24px;background:#333333"></div><div class="a" style="left:0;top:0;width:40px;height:24px;background:#52728f"></div><div class="a" style="left:95px;top:0;width:1px;height:24px;background:#2c2c2c"></div></div>
<svg style="left:582.5px;top:878.0px;" width="10" height="20" viewBox="0 0 10 20"><path d="M0.5 7 L5 2.5 L9.5 7 Z M0.5 13 L5 17.5 L9.5 13 Z" fill="#8c8c8c"/></svg>
<div class="t" style="left:489px;top:882.3px;font-size:13.4px;color:#f0f0f0;">Speed: 100 %</div>
<svg style="left:619px;top:880px;" width="18" height="14" viewBox="0 0 18 14"><rect x="0" y="0" width="18" height="13.5" rx="0.5" fill="#dadada"/><rect x="3.4" y="2" width="11.2" height="9.5" fill="#474747"/><circle cx="1.7" cy="1.90" r="0.8" fill="#474747"/><circle cx="16.3" cy="1.90" r="0.8" fill="#474747"/><circle cx="1.7" cy="3.84" r="0.8" fill="#474747"/><circle cx="16.3" cy="3.84" r="0.8" fill="#474747"/><circle cx="1.7" cy="5.78" r="0.8" fill="#474747"/><circle cx="16.3" cy="5.78" r="0.8" fill="#474747"/><circle cx="1.7" cy="7.72" r="0.8" fill="#474747"/><circle cx="16.3" cy="7.72" r="0.8" fill="#474747"/><circle cx="1.7" cy="9.66" r="0.8" fill="#474747"/><circle cx="16.3" cy="9.66" r="0.8" fill="#474747"/><circle cx="1.7" cy="11.60" r="0.8" fill="#474747"/><circle cx="16.3" cy="11.60" r="0.8" fill="#474747"/></svg>
<svg style="left:648px;top:879px;" width="21" height="16" viewBox="0 0 21 16"><rect x="0" y="4" width="16" height="11.5" rx="0.5" fill="#dadada"/><rect x="3.4" y="6" width="9.2" height="7.5" fill="#474747"/><circle cx="1.7" cy="5.90" r="0.8" fill="#474747"/><circle cx="14.3" cy="5.90" r="0.8" fill="#474747"/><circle cx="1.7" cy="7.44" r="0.8" fill="#474747"/><circle cx="14.3" cy="7.44" r="0.8" fill="#474747"/><circle cx="1.7" cy="8.98" r="0.8" fill="#474747"/><circle cx="14.3" cy="8.98" r="0.8" fill="#474747"/><circle cx="1.7" cy="10.52" r="0.8" fill="#474747"/><circle cx="14.3" cy="10.52" r="0.8" fill="#474747"/><circle cx="1.7" cy="12.06" r="0.8" fill="#474747"/><circle cx="14.3" cy="12.06" r="0.8" fill="#474747"/><circle cx="1.7" cy="13.60" r="0.8" fill="#474747"/><circle cx="14.3" cy="13.60" r="0.8" fill="#474747"/><rect x="3" y="-1" width="18" height="13.5" fill="#474747"/><rect x="4" y="0" width="16" height="11.5" rx="0.5" fill="#dadada"/><rect x="7.4" y="2" width="9.2" height="7.5" fill="#474747"/><circle cx="5.7" cy="1.90" r="0.8" fill="#474747"/><circle cx="18.3" cy="1.90" r="0.8" fill="#474747"/><circle cx="5.7" cy="3.44" r="0.8" fill="#474747"/><circle cx="18.3" cy="3.44" r="0.8" fill="#474747"/><circle cx="5.7" cy="4.98" r="0.8" fill="#474747"/><circle cx="18.3" cy="4.98" r="0.8" fill="#474747"/><circle cx="5.7" cy="6.52" r="0.8" fill="#474747"/><circle cx="18.3" cy="6.52" r="0.8" fill="#474747"/><circle cx="5.7" cy="8.06" r="0.8" fill="#474747"/><circle cx="18.3" cy="8.06" r="0.8" fill="#474747"/><circle cx="5.7" cy="9.60" r="0.8" fill="#474747"/><circle cx="18.3" cy="9.60" r="0.8" fill="#474747"/></svg>
<svg style="left:679px;top:878px;" width="19" height="18" viewBox="0 0 19 18"><rect x="0" y="2" width="18" height="13.5" rx="0.5" fill="#dadada"/><rect x="3.4" y="4" width="11.2" height="9.5" fill="#474747"/><circle cx="1.7" cy="3.90" r="0.8" fill="#474747"/><circle cx="16.3" cy="3.90" r="0.8" fill="#474747"/><circle cx="1.7" cy="5.84" r="0.8" fill="#474747"/><circle cx="16.3" cy="5.84" r="0.8" fill="#474747"/><circle cx="1.7" cy="7.78" r="0.8" fill="#474747"/><circle cx="16.3" cy="7.78" r="0.8" fill="#474747"/><circle cx="1.7" cy="9.72" r="0.8" fill="#474747"/><circle cx="16.3" cy="9.72" r="0.8" fill="#474747"/><circle cx="1.7" cy="11.66" r="0.8" fill="#474747"/><circle cx="16.3" cy="11.66" r="0.8" fill="#474747"/><circle cx="1.7" cy="13.60" r="0.8" fill="#474747"/><circle cx="16.3" cy="13.60" r="0.8" fill="#474747"/><path d="M3 17.5 L15 0.5" stroke="#474747" stroke-width="3.6"/><path d="M3 17.5 L15 0.5" stroke="#dadada" stroke-width="1.6"/></svg>
<svg style="left:1726px;top:877px;" width="20" height="20" viewBox="0 0 20 20"><path d="M10 0 Q4 6 1.5 12 Q0 17 4 19 Q2 13 10 0 Z M10 0 Q6 8 7 14 Q8 19 11 19.5 Q8 13 10 0 Z M10 0 Q11 7 14 11 Q17 15 14 19.5 Q20 17 19 12 Q16 6 10 0 Z" fill="#dadada"/></svg>
<svg style="left:1757px;top:877px;" width="22" height="20" viewBox="0 0 22 20"><rect x="0.5" y="6" width="3" height="7" fill="#dadada"/><path d="M3.5 6 L9 1 V18 L3.5 13 Z" fill="#dadada"/><path d="M12 15 H20 L16 19 Z" fill="#9a9a9a"/></svg>
<svg style="left:1786px;top:878px;" width="23" height="19" viewBox="0 0 23 19"><rect x="0" y="0.5" width="18" height="3" fill="#dadada"/><rect x="0" y="7" width="18" height="3" fill="#dadada"/><rect x="0" y="13.5" width="18" height="3" fill="#dadada"/><path d="M14 15 H22 L18 19 Z" fill="#9a9a9a"/></svg>
<svg style="left:1851px;top:880px;" width="16" height="16" viewBox="0 0 16 16"><rect x="6.5" y="1.5" width="8.5" height="8.5" fill="none" stroke="#dadada" stroke-width="1.1"/><rect x="6" y="1" width="9.5" height="1.8" fill="#dadada"/><rect x="1.5" y="6.5" width="8.5" height="8.5" fill="#474747" stroke="#dadada" stroke-width="1.1"/><rect x="1" y="6" width="9.5" height="1.8" fill="#dadada"/></svg>
<svg style="left:1887px;top:883px;" width="11" height="11" viewBox="0 0 11 11"><path d="M0.5 0.5 L10.5 10.5 M10.5 0.5 L0.5 10.5" stroke="#dadada" stroke-width="1.3"/></svg>
<div class="a" style="left:0px;top:904px;width:1920px;height:1px;background:#393939;"></div>
<div class="a" style="left:1px;top:905px;width:213px;height:28px;background:#3b3b3b;"></div>
<div class="a" style="left:1px;top:905px;width:213px;height:1px;background:#535353;"></div>
<div class="a" style="left:214px;top:905px;width:1689px;height:28px;background:#333333;"></div>
<svg style="left:8px;top:911px;" width="19" height="19" viewBox="0 0 19 19"><path d="M8 0 V16 M0 8 H16" stroke="#dadada" stroke-width="1.8"/><path d="M12 13 H19 L15.5 17 Z" fill="#9a9a9a"/></svg>
<svg style="left:190px;top:911px;" width="17" height="17" viewBox="0 0 17 17"><rect x="0.6" y="0.6" width="15.8" height="15.8" fill="none" stroke="#dadada" stroke-width="1.1"/><path d="M3 8.5 H14" stroke="#dadada" stroke-width="1.6"/><path d="M2.5 8.5 L6 5 V12 Z M14.5 8.5 L11 5 V12 Z" fill="#dadada"/></svg>
<div class="a" style="left:1px;top:933px;width:213px;height:21px;background:#333333;"></div>
<div class="a" style="left:1px;top:954px;width:213px;height:21px;background:#333333;"></div>
<div class="a" style="left:1px;top:953px;width:213px;height:2px;background:#52728f;"></div>
<div class="a" style="left:1px;top:973px;width:213px;height:2px;background:#52728f;"></div>
<svg style="left:6px;top:937px;" width="13" height="13" viewBox="0 0 13 13"><path d="M6 1 L12 7 L10 7.5 L8 9.5 L8.5 11.5 L1.5 4.5 L3.5 5 L5.5 3 Z" fill="#dadada"/><path d="M0.5 12.5 L4.5 8.5" stroke="#dadada" stroke-width="1.2"/></svg>
<div class="t" style="left:21px;top:937px;font-size:13px;color:#e2e2e2;">Black</div>
<svg style="left:6px;top:958px;" width="13" height="13" viewBox="0 0 13 13"><path d="M6 1 L12 7 L10 7.5 L8 9.5 L8.5 11.5 L1.5 4.5 L3.5 5 L5.5 3 Z" fill="#7a7a7a"/><path d="M0.5 12.5 L4.5 8.5" stroke="#7a7a7a" stroke-width="1.2"/></svg>
<div class="t" style="left:21px;top:958px;font-size:13px;color:#e2e2e2;">Warehouse</div>
<svg style="left:142px;top:935px;" width="15" height="14" viewBox="0 0 15 14"><path d="M0.8 7 Q7.5 -1.5 14.2 7" fill="none" stroke="#dadada" stroke-width="1.1"/><path d="M0.8 8 Q7.5 16 14.2 8" fill="none" stroke="#dadada" stroke-width="1.3"/><circle cx="7.5" cy="5.3" r="3.6" fill="#dadada"/></svg>
<svg style="left:142px;top:957px;" width="15" height="14" viewBox="0 0 15 14"><ellipse cx="7.5" cy="6.5" rx="6.7" ry="5.6" fill="none" stroke="#6a6a6a" stroke-width="0.8"/><path d="M1 8.5 Q7.5 14.5 14 8.5" fill="none" stroke="#9c9c9c" stroke-width="1.1"/></svg>
<svg style="left:162px;top:936px;" width="14" height="14" viewBox="0 0 14 14"><rect x="0.5" y="6.5" width="12.5" height="7.5" fill="#777"/><path d="M11.8 6.5 V4.8 Q11.8 1.2 9.2 0.8" fill="none" stroke="#777" stroke-width="1.5"/></svg>
<div class="t" style="left:178px;top:931px;font-size:19px;color:#777;font-style:italic">α</div>
<svg style="left:196px;top:935px;" width="15" height="15" viewBox="0 0 15 15"><rect width="15" height="15" fill="#4e4e4e"/><g fill="#6a6a6a"><rect x="5" y="0" width="5" height="5"/><rect x="0" y="5" width="5" height="5"/><rect x="10" y="5" width="5" height="5"/><rect x="5" y="10" width="5" height="5"/></g></svg>
<svg style="left:162px;top:958px;" width="14" height="14" viewBox="0 0 14 14"><rect x="0.5" y="6.5" width="12.5" height="7.5" fill="#777"/><path d="M11.8 6.5 V4.8 Q11.8 1.2 9.2 0.8" fill="none" stroke="#777" stroke-width="1.5"/></svg>
<div class="t" style="left:178px;top:953px;font-size:19px;color:#777;font-style:italic">α</div>
<svg style="left:196px;top:960px;" width="16" height="12" viewBox="0 0 16 12"><g fill="#6e6e6e"><rect x="0" y="0" width="7" height="3"/><rect x="8" y="0" width="8" height="3"/><rect x="0" y="4.5" width="2" height="3"/><rect x="3.5" y="4.5" width="8" height="3"/><rect x="13" y="4.5" width="3" height="3"/><rect x="0" y="9" width="7" height="3"/><rect x="8" y="9" width="8" height="3"/></g></svg>
<svg style="left:0px;top:0px;" width="1920" height="1032" viewBox="0 0 1920 1032"><rect x="214" y="905" width="1689" height="20" fill="#333333"/><rect x="214" y="924" width="1689" height="9" fill="#363636"/><rect x="214" y="933" width="1689" height="20" fill="#333333"/><rect x="233" y="933" width="60" height="20" fill="#363636"/><rect x="214" y="953" width="1689" height="23" fill="#35383b"/><rect x="233" y="953" width="60" height="23" fill="#3a4048"/><rect x="214" y="952" width="1689" height="1" fill="#2f2f2f"/><rect x="214" y="932" width="1689" height="1" fill="#2f2f2f"/><rect x="214" y="976" width="1689" height="1" fill="#2f2f2f"/><rect x="213" y="924" width="1" height="52" fill="#313131"/><rect x="213" y="905" width="1" height="19" fill="#393939"/><rect x="233" y="924" width="1" height="52" fill="#313131"/><rect x="253" y="924" width="1" height="52" fill="#313131"/><rect x="273" y="924" width="1" height="52" fill="#313131"/><rect x="273" y="905" width="1" height="19" fill="#393939"/><rect x="293" y="924" width="1" height="52" fill="#313131"/><rect x="313" y="924" width="1" height="52" fill="#313131"/><rect x="333" y="924" width="1" height="52" fill="#313131"/><rect x="333" y="905" width="1" height="19" fill="#393939"/><rect x="353" y="924" width="1" height="52" fill="#313131"/><rect x="373" y="924" width="1" height="52" fill="#313131"/><rect x="393" y="924" width="1" height="52" fill="#313131"/><rect x="393" y="905" width="1" height="19" fill="#393939"/><rect x="413" y="924" width="1" height="52" fill="#313131"/><rect x="433" y="924" width="1" height="52" fill="#313131"/><rect x="453" y="924" width="1" height="52" fill="#313131"/><rect x="453" y="905" width="1" height="19" fill="#393939"/><rect x="473" y="924" width="1" height="52" fill="#313131"/><rect x="493" y="924" width="1" height="52" fill="#313131"/><rect x="513" y="924" width="1" height="52" fill="#313131"/><rect x="513" y="905" width="1" height="19" fill="#393939"/><rect x="533" y="924" width="1" height="52" fill="#313131"/><rect x="553" y="924" width="1" height="52" fill="#313131"/><rect x="573" y="924" width="1" height="52" fill="#313131"/><rect x="573" y="905" width="1" height="19" fill="#393939"/><rect x="593" y="924" width="1" height="52" fill="#313131"/><rect x="613" y="924" width="1" height="52" fill="#313131"/><rect x="633" y="924" width="1" height="52" fill="#313131"/><rect x="633" y="905" width="1" height="19" fill="#393939"/><rect x="653" y="924" width="1" height="52" fill="#313131"/><rect x="673" y="924" width="1" height="52" fill="#313131"/><rect x="693" y="924" width="1" height="52" fill="#313131"/><rect x="693" y="905" width="1" height="19" fill="#393939"/><rect x="713" y="924" width="1" height="52" fill="#313131"/><rect x="733" y="924" width="1" height="52" fill="#313131"/><rect x="753" y="924" width="1" height="52" fill="#313131"/><rect x="753" y="905" width="1" height="19" fill="#393939"/><rect x="773" y="924" width="1" height="52" fill="#313131"/><rect x="793" y="924" width="1" height="52" fill="#313131"/><rect x="813" y="924" width="1" height="52" fill="#313131"/><rect x="813" y="905" width="1" height="19" fill="#393939"/><rect x="833" y="924" width="1" height="52" fill="#313131"/><rect x="853" y="924" width="1" height="52" fill="#313131"/><rect x="873" y="924" width="1" height="52" fill="#313131"/><rect x="873" y="905" width="1" height="19" fill="#393939"/><rect x="893" y="924" width="1" height="52" fill="#313131"/><rect x="913" y="924" width="1" height="52" fill="#313131"/><rect x="933" y="924" width="1" height="52" fill="#313131"/><rect x="933" y="905" width="1" height="19" fill="#393939"/><rect x="953" y="924" width="1" height="52" fill="#313131"/><rect x="973" y="924" width="1" height="52" fill="#313131"/><rect x="993" y="924" width="1" height="52" fill="#313131"/><rect x="993" y="905" width="1" height="19" fill="#393939"/><rect x="1013" y="924" width="1" height="52" fill="#313131"/><rect x="1033" y="924" width="1" height="52" fill="#313131"/><rect x="1053" y="924" width="1" height="52" fill="#313131"/><rect x="1053" y="905" width="1" height="19" fill="#393939"/><rect x="1073" y="924" width="1" height="52" fill="#313131"/><rect x="1093" y="924" width="1" height="52" fill="#313131"/><rect x="1113" y="924" width="1" height="52" fill="#313131"/><rect x="1113" y="905" width="1" height="19" fill="#393939"/><rect x="1133" y="924" width="1" height="52" fill="#313131"/><rect x="1153" y="924" width="1" height="52" fill="#313131"/><rect x="1173" y="924" width="1" height="52" fill="#313131"/><rect x="1173" y="905" width="1" height="19" fill="#393939"/><rect x="1193" y="924" width="1" height="52" fill="#313131"/><rect x="1213" y="924" width="1" height="52" fill="#313131"/><rect x="1233" y="924" width="1" height="52" fill="#313131"/><rect x="1233" y="905" width="1" height="19" fill="#393939"/><rect x="1253" y="924" width="1" height="52" fill="#313131"/><rect x="1273" y="924" width="1" height="52" fill="#313131"/><rect x="1293" y="924" width="1" height="52" fill="#313131"/><rect x="1293" y="905" width="1" height="19" fill="#393939"/><rect x="1313" y="924" width="1" height="52" fill="#313131"/><rect x="1333" y="924" width="1" height="52" fill="#313131"/><rect x="1353" y="924" width="1" height="52" fill="#313131"/><rect x="1353" y="905" width="1" height="19" fill="#393939"/><rect x="1373" y="924" width="1" height="52" fill="#313131"/><rect x="1393" y="924" width="1" height="52" fill="#313131"/><rect x="1413" y="924" width="1" height="52" fill="#313131"/><rect x="1413" y="905" width="1" height="19" fill="#393939"/><rect x="1433" y="924" width="1" height="52" fill="#313131"/><rect x="1453" y="924" width="1" height="52" fill="#313131"/><rect x="1473" y="924" width="1" height="52" fill="#313131"/><rect x="1473" y="905" width="1" height="19" fill="#393939"/><rect x="1493" y="924" width="1" height="52" fill="#313131"/><rect x="1513" y="924" width="1" height="52" fill="#313131"/><rect x="1533" y="924" width="1" height="52" fill="#313131"/><rect x="1533" y="905" width="1" height="19" fill="#393939"/><rect x="1553" y="924" width="1" height="52" fill="#313131"/><rect x="1573" y="924" width="1" height="52" fill="#313131"/><rect x="1593" y="924" width="1" height="52" fill="#313131"/><rect x="1593" y="905" width="1" height="19" fill="#393939"/><rect x="1613" y="924" width="1" height="52" fill="#313131"/><rect x="1633" y="924" width="1" height="52" fill="#313131"/><rect x="1653" y="924" width="1" height="52" fill="#313131"/><rect x="1653" y="905" width="1" height="19" fill="#393939"/><rect x="1673" y="924" width="1" height="52" fill="#313131"/><rect x="1693" y="924" width="1" height="52" fill="#313131"/><rect x="1713" y="924" width="1" height="52" fill="#313131"/><rect x="1713" y="905" width="1" height="19" fill="#393939"/><rect x="1733" y="924" width="1" height="52" fill="#313131"/><rect x="1753" y="924" width="1" height="52" fill="#313131"/><rect x="1773" y="924" width="1" height="52" fill="#313131"/><rect x="1773" y="905" width="1" height="19" fill="#393939"/><rect x="1793" y="924" width="1" height="52" fill="#313131"/><rect x="1813" y="924" width="1" height="52" fill="#313131"/><rect x="1833" y="924" width="1" height="52" fill="#313131"/><rect x="1833" y="905" width="1" height="19" fill="#393939"/><rect x="1853" y="924" width="1" height="52" fill="#313131"/><rect x="1873" y="924" width="1" height="52" fill="#313131"/><rect x="1893" y="924" width="1" height="52" fill="#313131"/><rect x="1893" y="905" width="1" height="19" fill="#393939"/><rect x="214" y="925" width="19" height="7" fill="#e3992f"/><rect x="216" y="953" width="15" height="23" fill="#645039"/><rect x="214" y="933" width="2" height="19" fill="#e3992f"/><rect x="231" y="933" width="2" height="19" fill="#e3992f"/><rect x="214" y="953" width="2" height="23" fill="#e3992f"/><rect x="231" y="953" width="2" height="23" fill="#e3992f"/><circle cx="223.5" cy="964.5" r="2.6" fill="#e3992f"/></svg>
<div class="t" style="left:216.5px;top:909px;font-size:13px;color:#d8d8d8">0</div>
<div class="t" style="left:276.5px;top:909px;font-size:13px;color:#d8d8d8">3</div>
<div class="t" style="left:336.5px;top:909px;font-size:13px;color:#d8d8d8">6</div>
<div class="t" style="left:396.5px;top:909px;font-size:13px;color:#d8d8d8">9</div>
<div class="t" style="left:456.5px;top:909px;font-size:13px;color:#d8d8d8">12</div>
<div class="t" style="left:516.5px;top:909px;font-size:13px;color:#d8d8d8">15</div>
<div class="t" style="left:576.5px;top:909px;font-size:13px;color:#d8d8d8">18</div>
<div class="t" style="left:636.5px;top:909px;font-size:13px;color:#d8d8d8">21</div>
<div class="t" style="left:696.5px;top:909px;font-size:13px;color:#d8d8d8">24</div>
<div class="t" style="left:756.5px;top:909px;font-size:13px;color:#d8d8d8">27</div>
<div class="t" style="left:816.5px;top:909px;font-size:13px;color:#d8d8d8">30</div>
<div class="t" style="left:876.5px;top:909px;font-size:13px;color:#d8d8d8">33</div>
<div class="t" style="left:936.5px;top:909px;font-size:13px;color:#d8d8d8">36</div>
<div class="t" style="left:996.5px;top:909px;font-size:13px;color:#d8d8d8">39</div>
<div class="t" style="left:1056.5px;top:909px;font-size:13px;color:#d8d8d8">42</div>
<div class="t" style="left:1116.5px;top:909px;font-size:13px;color:#d8d8d8">45</div>
<div class="t" style="left:1176.5px;top:909px;font-size:13px;color:#d8d8d8">48</div>
<div class="t" style="left:1236.5px;top:909px;font-size:13px;color:#d8d8d8">51</div>
<div class="t" style="left:1296.5px;top:909px;font-size:13px;color:#d8d8d8">54</div>
<div class="t" style="left:1356.5px;top:909px;font-size:13px;color:#d8d8d8">57</div>
<div class="t" style="left:1416.5px;top:909px;font-size:13px;color:#d8d8d8">60</div>
<div class="t" style="left:1476.5px;top:909px;font-size:13px;color:#d8d8d8">63</div>
<div class="t" style="left:1536.5px;top:909px;font-size:13px;color:#d8d8d8">66</div>
<div class="t" style="left:1596.5px;top:909px;font-size:13px;color:#d8d8d8">69</div>
<div class="t" style="left:1656.5px;top:909px;font-size:13px;color:#d8d8d8">72</div>
<div class="t" style="left:1716.5px;top:909px;font-size:13px;color:#d8d8d8">75</div>
<div class="t" style="left:1776.5px;top:909px;font-size:13px;color:#d8d8d8">78</div>
<div class="t" style="left:1836.5px;top:909px;font-size:13px;color:#d8d8d8">81</div>
<div class="t" style="left:1896.5px;top:909px;font-size:13px;color:#d8d8d8">84</div>
<div class="a" style="left:1903px;top:905px;width:17px;height:70px;background:#3c3c3c;"></div>
<div class="a" style="left:1903px;top:905px;width:17px;height:71px;background:#3c3c3c"></div>
<div class="a" style="left:1903px;top:905px;width:16px;height:16px;border:1px solid #5a5a5a;background:#474747"></div>
<svg style="left:1906px;top:910px;" width="10" height="6" viewBox="0 0 10 6"><path d="M0 5.5 L5 0.5 L10 5.5 Z" fill="#b0b0b0"/></svg>
<div class="a" style="left:1903px;top:922px;width:16px;height:32px;border:1px solid #5a5a5a;background:#444"></div>
<div class="a" style="left:1903px;top:960px;width:16px;height:16px;border:1px solid #5a5a5a;background:#474747"></div>
<svg style="left:1906px;top:965px;" width="10" height="6" viewBox="0 0 10 6"><path d="M0 0.5 L5 5.5 L10 0.5 Z" fill="#b0b0b0"/></svg>
<div class="a" style="left:1px;top:977px;width:1902px;height:17px;background:#3c3c3c;"></div>
<div class="a" style="left:1px;top:978px;width:16px;height:16px;border:1px solid #5a5a5a;background:#474747"></div>
<svg style="left:6px;top:981px;" width="6" height="10" viewBox="0 0 6 10"><path d="M5.5 0 L0.5 5 L5.5 10 Z" fill="#b0b0b0"/></svg>
<div class="a" style="left:18px;top:978px;width:1811px;height:16px;border:1px solid #5a5a5a;background:#444"></div>
<div class="a" style="left:1886px;top:978px;width:16px;height:16px;border:1px solid #5a5a5a;background:#474747"></div>
<svg style="left:1891px;top:981px;" width="6" height="10" viewBox="0 0 6 10"><path d="M0.5 0 L5.5 5 L0.5 10 Z" fill="#b0b0b0"/></svg>
<svg style="left:7px;top:1004px;" width="16" height="16" viewBox="0 0 16 16"><rect x="0.6" y="0.6" width="14.8" height="14.8" fill="none" stroke="#dadada" stroke-width="1.1"/><circle cx="8" cy="8" r="4.5" fill="none" stroke="#dadada" stroke-width="1" stroke-dasharray="1.2 1.3"/></svg>
<div class="t" style="left:37px;top:1006px;font-size:14px;color:#e0e0e0;">b) Basic-1</div>
<div class="t" style="left:472px;top:1006px;font-size:15px;color:#e0e0e0;">RGB/Alpha (8-bit integer/channel)&nbsp; sRGB built-in</div>
<div class="a" style="left:1405px;top:998px;width:142px;height:29px;border:1px solid #383838"></div>
<div class="t" style="left:1408px;top:1006px;font-size:14px;color:#e0e0e0;">384 <u>x</u> 384 (41.1 MiB)</div>
<svg style="left:1554px;top:1000px;" width="26" height="26" viewBox="0 0 26 26"><circle cx="13" cy="13" r="12.5" fill="#2b2b2b"/><g fill="#555"><rect x="12.5" y="2" width="1" height="2"/><rect x="12.5" y="6" width="1" height="2"/><rect x="12.5" y="18" width="1" height="2"/><rect x="12.5" y="22" width="1" height="2"/><rect x="3" y="12.5" width="2" height="1"/><rect x="7" y="12.5" width="2" height="1"/></g><line x1="12" y1="13" x2="24" y2="13" stroke="#e0e0e0" stroke-width="1.2"/><circle cx="12.5" cy="13" r="1.3" fill="#fff"/><circle cx="24" cy="13" r="1.3" fill="#fff"/></svg>
<div class="t" style="left:1589px;top:1006px;font-size:14px;color:#e0e0e0;">0.00°</div>
<div class="t" style="left:1745px;top:1006px;font-size:14px;color:#e0e0e0;">133.3%</div>
<div class="a" style="left:1809px;top:1009px;width:81px;height:7px;border-radius:3.5px;background:#333"></div>
<div class="a" style="left:1809px;top:1010px;width:22px;height:5px;background:#6a90b4;border-radius:2px"></div>
<div class="a" style="left:1831px;top:1005px;width:15px;height:15px;border:1px solid #2a2a2a;border-radius:3px;background:#474747"></div>
<svg style="left:1895px;top:1006px;" width="21" height="17" viewBox="0 0 21 17"><rect x="0.6" y="0.6" width="19.5" height="12" fill="none" stroke="#dadada" stroke-width="1.2"/><path d="M10.5 13 V16 M3 16.5 H18" stroke="#dadada" stroke-width="1.2"/><rect x="9.5" y="5.5" width="2" height="2" fill="#dadada"/></svg>
<div class="a" style="left:0px;top:1030px;width:1920px;height:2px;background:#2b2a29;"></div>
<div class="a" style="left:0px;top:1030px;width:60px;height:2px;background:#25292c;"></div>
<div class="a" style="left:60px;top:1030px;width:430px;height:1px;background:#5e5e5e;"></div>
<div class="a" style="left:742px;top:1030px;width:60px;height:1px;background:#5e5e5e;"></div></body></html>
